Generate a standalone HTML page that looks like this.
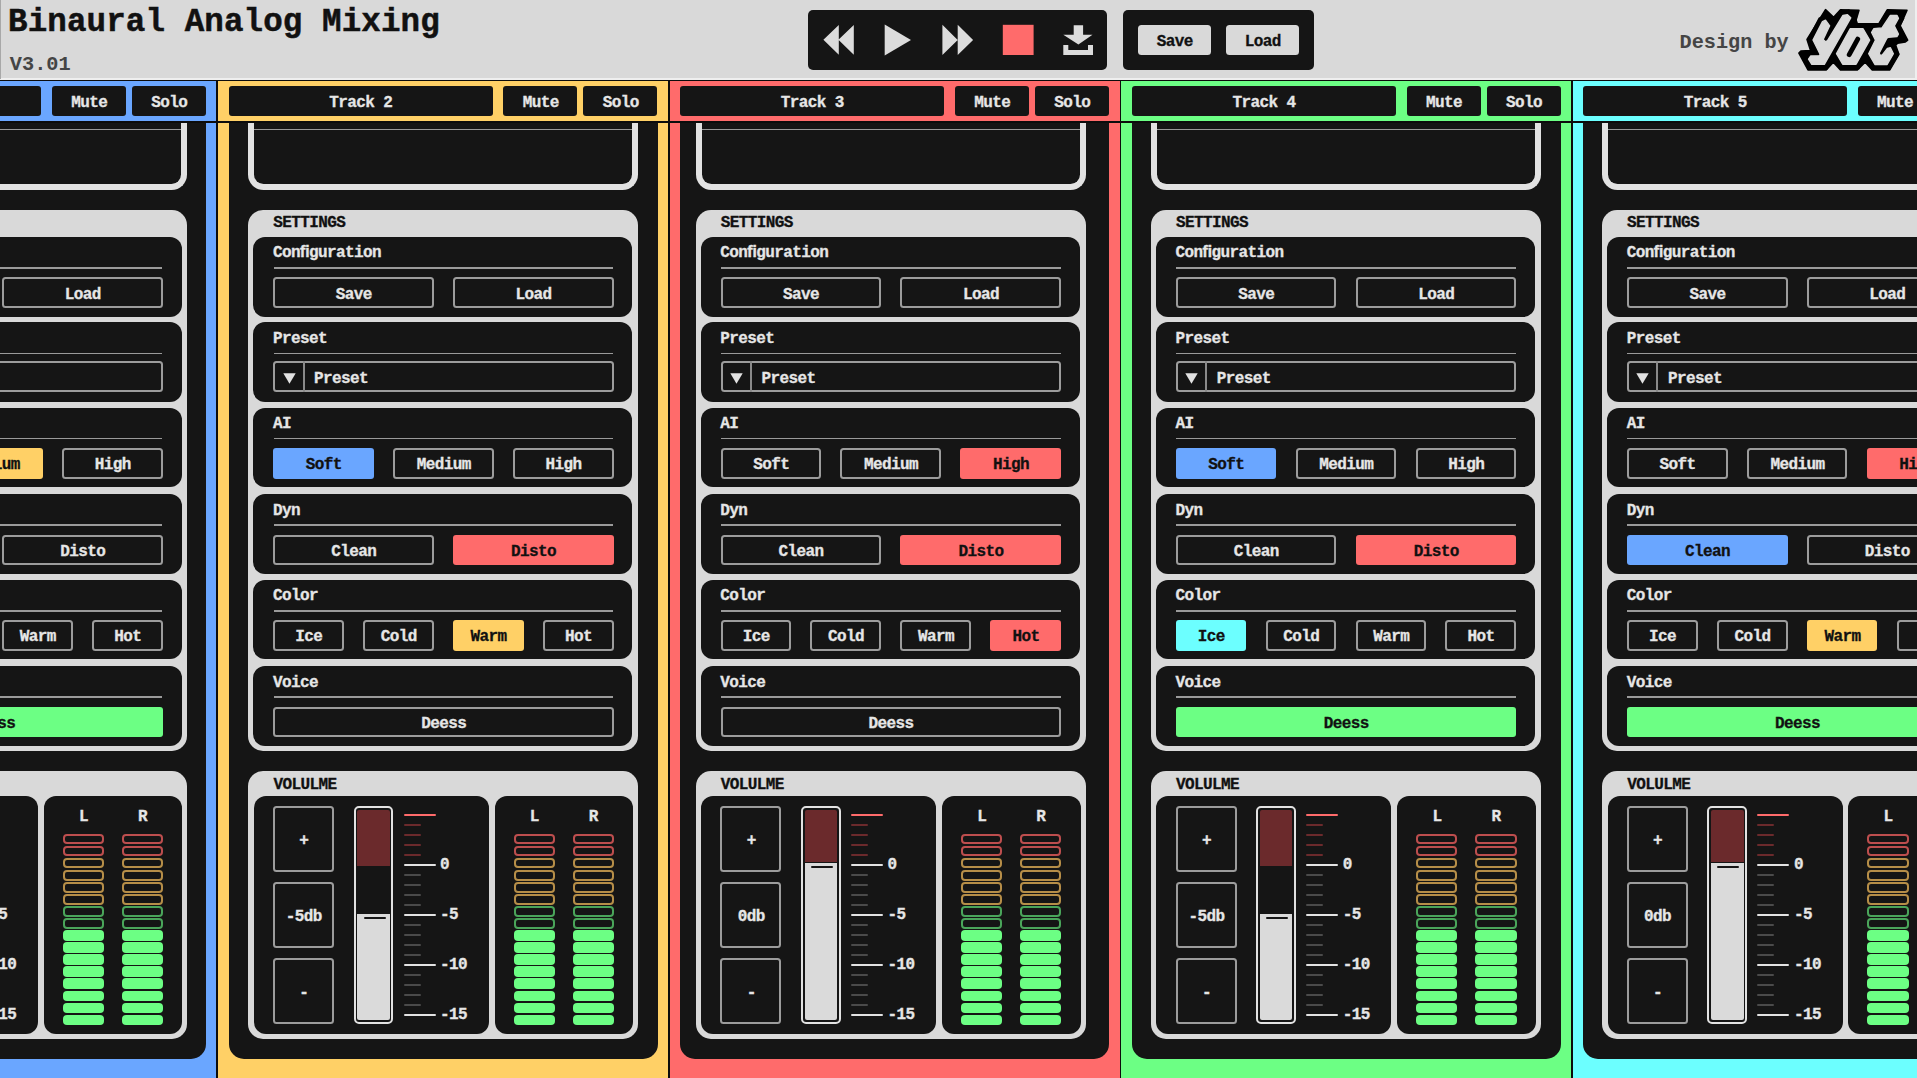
<!DOCTYPE html>
<html><head><meta charset="utf-8"><title>Binaural Analog Mixing</title>
<style>
html,body{margin:0;padding:0;}
body{width:1917px;height:1078px;overflow:hidden;position:relative;background:#151515;font-family:"Liberation Mono",monospace;font-weight:bold;}
div,svg{position:absolute;}
.t{white-space:nowrap;-webkit-text-stroke:0.3px currentColor;}
#wrap{left:0;top:0;width:1917px;height:1078px;overflow:hidden;}
</style></head><body><div id="wrap">
<div style="left:-233.27px;top:81px;width:450.2px;height:997px;background:#6aa6ff;"></div>
<div style="left:-235.07px;top:79.7px;width:1.8px;height:1000px;background:#0c0c0c;"></div>
<div style="left:-222.97px;top:86.4px;width:264px;height:29.2px;background:#151515;border-radius:3px;"></div>
<div class="t" style="left:-222.67px;top:93.68px;width:264px;font-size:16px;line-height:18.12px;text-align:center;letter-spacing:-0.6px;color:#e6e6e6;">Track 1</div>
<div style="left:51.93px;top:86.4px;width:74px;height:29.2px;background:#151515;border-radius:3px;"></div>
<div class="t" style="left:52.23px;top:93.68px;width:74px;font-size:16px;line-height:18.12px;text-align:center;letter-spacing:-0.6px;color:#e6e6e6;">Mute</div>
<div style="left:131.93px;top:86.4px;width:74px;height:29.2px;background:#151515;border-radius:3px;"></div>
<div class="t" style="left:132.23px;top:93.68px;width:74px;font-size:16px;line-height:18.12px;text-align:center;letter-spacing:-0.6px;color:#e6e6e6;">Solo</div>
<div style="left:-233.27px;top:121px;width:450.2px;height:1.6px;background:#0c0c0c;"></div>
<div style="left:-222.67px;top:122.5px;width:429px;height:936.2px;background:#151515;border-radius:0 0 15px 15px;"></div>
<div style="left:-202.7px;top:122.5px;width:390px;height:67.6px;border:6px solid #e2e2e2;border-top:0;border-radius:0 0 15.5px 15.5px;box-sizing:border-box;"></div>
<div style="left:-196.7px;top:128.8px;width:378px;height:1.5px;background:#9a9a9a;"></div>
<div style="left:-202.7px;top:209.6px;width:390px;height:541.1px;background:#d9d9d9;border-radius:15px;"></div>
<div class="t" style="left:-177.5px;top:213.98px;font-size:16px;line-height:18.12px;letter-spacing:-0.6px;color:#111;">SETTINGS</div>
<div style="left:-197.5px;top:236.8px;width:379px;height:79.8px;background:#151515;border-radius:12px;"></div>
<div class="t" style="left:-177.9px;top:244.48px;font-size:16px;line-height:18.12px;letter-spacing:-0.6px;color:#e6e6e6;">Con&#xFB01;guration</div>
<div style="left:-177.2px;top:267px;width:339.5px;height:1.8px;background:#9a9a9a;"></div>
<div style="left:-177.7px;top:277.4px;width:160.65px;height:30.6px;border:2px solid #9c9c9c;border-radius:3.5px;box-sizing:border-box;"></div>
<div class="t" style="left:-197.4px;top:285.58px;width:200.65px;font-size:16px;line-height:18.12px;text-align:center;letter-spacing:-0.6px;color:#e6e6e6;">Save</div>
<div style="left:2.15px;top:277.4px;width:160.65px;height:30.6px;border:2px solid #9c9c9c;border-radius:3.5px;box-sizing:border-box;"></div>
<div class="t" style="left:-17.55px;top:285.58px;width:200.65px;font-size:16px;line-height:18.12px;text-align:center;letter-spacing:-0.6px;color:#e6e6e6;">Load</div>
<div style="left:-197.5px;top:322.3px;width:379px;height:79.8px;background:#151515;border-radius:12px;"></div>
<div class="t" style="left:-177.9px;top:329.98px;font-size:16px;line-height:18.12px;letter-spacing:-0.6px;color:#e6e6e6;">Preset</div>
<div style="left:-177.2px;top:352.5px;width:339.5px;height:1.8px;background:#9a9a9a;"></div>
<div style="left:-177.7px;top:361.1px;width:340.5px;height:30.6px;border:2px solid #9c9c9c;border-radius:3.5px;box-sizing:border-box;"></div>
<div style="left:-148.3px;top:361.1px;width:2px;height:30.6px;background:#8a8a8a;"></div>
<svg class="a" style="left:-168.3px;top:372.5px" width="13" height="11" viewBox="0 0 13 11"><path d="M0.3 0.3H12.7L6.5 10.7Z" fill="#e2e2e2"/></svg>
<div class="t" style="left:-136.7px;top:369.88px;font-size:16px;line-height:18.12px;letter-spacing:-0.6px;color:#e6e6e6;">Preset</div>
<div style="left:-197.5px;top:407.5px;width:379px;height:79.8px;background:#151515;border-radius:12px;"></div>
<div class="t" style="left:-177.9px;top:415.18px;font-size:16px;line-height:18.12px;letter-spacing:-0.6px;color:#e6e6e6;">AI</div>
<div style="left:-177.2px;top:437.7px;width:339.5px;height:1.8px;background:#9a9a9a;"></div>
<div style="left:-177.7px;top:448.1px;width:100.7px;height:30.6px;border:2px solid #9c9c9c;border-radius:3.5px;box-sizing:border-box;"></div>
<div class="t" style="left:-197.4px;top:456.28px;width:140.7px;font-size:16px;line-height:18.12px;text-align:center;letter-spacing:-0.6px;color:#e6e6e6;">Soft</div>
<div style="left:-57.8px;top:448.1px;width:100.7px;height:30.6px;background:#ffd066;border-radius:3px;"></div>
<div class="t" style="left:-77.5px;top:456.28px;width:140.7px;font-size:16px;line-height:18.12px;text-align:center;letter-spacing:-0.6px;color:#111;">Medium</div>
<div style="left:62.1px;top:448.1px;width:100.7px;height:30.6px;border:2px solid #9c9c9c;border-radius:3.5px;box-sizing:border-box;"></div>
<div class="t" style="left:42.4px;top:456.28px;width:140.7px;font-size:16px;line-height:18.12px;text-align:center;letter-spacing:-0.6px;color:#e6e6e6;">High</div>
<div style="left:-197.5px;top:494.1px;width:379px;height:79.8px;background:#151515;border-radius:12px;"></div>
<div class="t" style="left:-177.9px;top:501.78px;font-size:16px;line-height:18.12px;letter-spacing:-0.6px;color:#e6e6e6;">Dyn</div>
<div style="left:-177.2px;top:524.3px;width:339.5px;height:1.8px;background:#9a9a9a;"></div>
<div style="left:-177.7px;top:534.7px;width:160.65px;height:30.6px;background:#6aa6ff;border-radius:3px;"></div>
<div class="t" style="left:-197.4px;top:542.88px;width:200.65px;font-size:16px;line-height:18.12px;text-align:center;letter-spacing:-0.6px;color:#111;">Clean</div>
<div style="left:2.15px;top:534.7px;width:160.65px;height:30.6px;border:2px solid #9c9c9c;border-radius:3.5px;box-sizing:border-box;"></div>
<div class="t" style="left:-17.55px;top:542.88px;width:200.65px;font-size:16px;line-height:18.12px;text-align:center;letter-spacing:-0.6px;color:#e6e6e6;">Disto</div>
<div style="left:-197.5px;top:579.6px;width:379px;height:79.8px;background:#151515;border-radius:12px;"></div>
<div class="t" style="left:-177.9px;top:587.28px;font-size:16px;line-height:18.12px;letter-spacing:-0.6px;color:#e6e6e6;">Color</div>
<div style="left:-177.2px;top:609.8px;width:339.5px;height:1.8px;background:#9a9a9a;"></div>
<div style="left:-177.7px;top:620.2px;width:70.72px;height:30.6px;background:#6cffff;border-radius:3px;"></div>
<div class="t" style="left:-197.4px;top:628.38px;width:110.72px;font-size:16px;line-height:18.12px;text-align:center;letter-spacing:-0.6px;color:#111;">Ice</div>
<div style="left:-87.77px;top:620.2px;width:70.72px;height:30.6px;border:2px solid #9c9c9c;border-radius:3.5px;box-sizing:border-box;"></div>
<div class="t" style="left:-107.47px;top:628.38px;width:110.72px;font-size:16px;line-height:18.12px;text-align:center;letter-spacing:-0.6px;color:#e6e6e6;">Cold</div>
<div style="left:2.15px;top:620.2px;width:70.72px;height:30.6px;border:2px solid #9c9c9c;border-radius:3.5px;box-sizing:border-box;"></div>
<div class="t" style="left:-17.55px;top:628.38px;width:110.72px;font-size:16px;line-height:18.12px;text-align:center;letter-spacing:-0.6px;color:#e6e6e6;">Warm</div>
<div style="left:92.07px;top:620.2px;width:70.72px;height:30.6px;border:2px solid #9c9c9c;border-radius:3.5px;box-sizing:border-box;"></div>
<div class="t" style="left:72.37px;top:628.38px;width:110.72px;font-size:16px;line-height:18.12px;text-align:center;letter-spacing:-0.6px;color:#e6e6e6;">Hot</div>
<div style="left:-197.5px;top:666.2px;width:379px;height:79.8px;background:#151515;border-radius:12px;"></div>
<div class="t" style="left:-177.9px;top:673.88px;font-size:16px;line-height:18.12px;letter-spacing:-0.6px;color:#e6e6e6;">Voice</div>
<div style="left:-177.2px;top:696.4px;width:339.5px;height:1.8px;background:#9a9a9a;"></div>
<div style="left:-177.7px;top:706.8px;width:340.5px;height:30.6px;background:#6cff84;border-radius:3px;"></div>
<div class="t" style="left:-197.4px;top:714.98px;width:380.5px;font-size:16px;line-height:18.12px;text-align:center;letter-spacing:-0.6px;color:#111;">Deess</div>
<div style="left:-202.7px;top:771.2px;width:390px;height:267.8px;background:#d9d9d9;border-radius:15px;"></div>
<div class="t" style="left:-177.4px;top:775.88px;font-size:16px;line-height:18.12px;letter-spacing:-0.6px;color:#111;">VOLULME</div>
<div style="left:-197px;top:796px;width:235.1px;height:237.8px;background:#151515;border-radius:12px;"></div>
<div style="left:43.8px;top:796px;width:138.7px;height:237.8px;background:#151515;border-radius:12px;"></div>
<div style="left:-177.8px;top:805.7px;width:61px;height:66.4px;border:2px solid #9c9c9c;border-radius:3.5px;box-sizing:border-box;"></div>
<div class="t" style="left:-187px;top:831.88px;width:80px;font-size:16px;line-height:18.12px;text-align:center;letter-spacing:-0.6px;color:#e6e6e6;">+</div>
<div style="left:-177.8px;top:881.65px;width:61px;height:66.4px;border:2px solid #9c9c9c;border-radius:3.5px;box-sizing:border-box;"></div>
<div class="t" style="left:-187px;top:907.83px;width:80px;font-size:16px;line-height:18.12px;text-align:center;letter-spacing:-0.6px;color:#e6e6e6;">0db</div>
<div style="left:-177.8px;top:957.6px;width:61px;height:66.4px;border:2px solid #9c9c9c;border-radius:3.5px;box-sizing:border-box;"></div>
<div class="t" style="left:-187px;top:983.78px;width:80px;font-size:16px;line-height:18.12px;text-align:center;letter-spacing:-0.6px;color:#e6e6e6;">-</div>
<div style="left:-97.3px;top:806.2px;width:39.9px;height:217.8px;border:2px solid #e2e2e2;border-radius:5px;box-sizing:border-box;"></div>
<div style="left:-93.6px;top:809.6px;width:32.6px;height:52.8px;background:#6b2a2c;border-radius:2px 2px 0 0;"></div>
<div style="left:-93.6px;top:863.2px;width:32.6px;height:157.3px;background:#dadada;border-radius:0 0 2px 2px;"></div>
<div style="left:-87.2px;top:866.2px;width:22px;height:2.2px;background:#151515;border-radius:1px;"></div>
<div style="left:-47.3px;top:814.1px;width:32.1px;height:2.3px;background:#ff6b6b;border-radius:1px;"></div>
<div style="left:-47.3px;top:824.2px;width:17px;height:2.1px;background:#6b2a2c;border-radius:1px;"></div>
<div style="left:-47.3px;top:834.2px;width:17px;height:2.1px;background:#6b2a2c;border-radius:1px;"></div>
<div style="left:-47.3px;top:844.2px;width:17px;height:2.1px;background:#6b2a2c;border-radius:1px;"></div>
<div style="left:-47.3px;top:854.2px;width:17px;height:2.1px;background:#6b2a2c;border-radius:1px;"></div>
<div style="left:-47.3px;top:864.1px;width:32.1px;height:2.3px;background:#e2e2e2;border-radius:1px;"></div>
<div style="left:-47.3px;top:874.2px;width:17px;height:2.1px;background:#4a4a4a;border-radius:1px;"></div>
<div style="left:-47.3px;top:884.2px;width:17px;height:2.1px;background:#4a4a4a;border-radius:1px;"></div>
<div style="left:-47.3px;top:894.2px;width:17px;height:2.1px;background:#4a4a4a;border-radius:1px;"></div>
<div style="left:-47.3px;top:904.2px;width:17px;height:2.1px;background:#4a4a4a;border-radius:1px;"></div>
<div style="left:-47.3px;top:914.1px;width:32.1px;height:2.3px;background:#e2e2e2;border-radius:1px;"></div>
<div style="left:-47.3px;top:924.2px;width:17px;height:2.1px;background:#4a4a4a;border-radius:1px;"></div>
<div style="left:-47.3px;top:934.2px;width:17px;height:2.1px;background:#4a4a4a;border-radius:1px;"></div>
<div style="left:-47.3px;top:944.2px;width:17px;height:2.1px;background:#4a4a4a;border-radius:1px;"></div>
<div style="left:-47.3px;top:954.2px;width:17px;height:2.1px;background:#4a4a4a;border-radius:1px;"></div>
<div style="left:-47.3px;top:964.1px;width:32.1px;height:2.3px;background:#e2e2e2;border-radius:1px;"></div>
<div style="left:-47.3px;top:974.2px;width:17px;height:2.1px;background:#4a4a4a;border-radius:1px;"></div>
<div style="left:-47.3px;top:984.2px;width:17px;height:2.1px;background:#4a4a4a;border-radius:1px;"></div>
<div style="left:-47.3px;top:994.2px;width:17px;height:2.1px;background:#4a4a4a;border-radius:1px;"></div>
<div style="left:-47.3px;top:1004.2px;width:17px;height:2.1px;background:#4a4a4a;border-radius:1px;"></div>
<div style="left:-47.3px;top:1014.1px;width:32.1px;height:2.3px;background:#e2e2e2;border-radius:1px;"></div>
<div class="t" style="left:-10.7px;top:856.48px;font-size:16px;line-height:18.12px;letter-spacing:-0.6px;color:#e6e6e6;">0</div>
<div class="t" style="left:-10.7px;top:906.48px;font-size:16px;line-height:18.12px;letter-spacing:-0.6px;color:#e6e6e6;">-5</div>
<div class="t" style="left:-10.7px;top:956.48px;font-size:16px;line-height:18.12px;letter-spacing:-0.6px;color:#e6e6e6;">-10</div>
<div class="t" style="left:-10.7px;top:1006.48px;font-size:16px;line-height:18.12px;letter-spacing:-0.6px;color:#e6e6e6;">-15</div>
<div class="t" style="left:68.5px;top:807.98px;width:30px;font-size:16px;line-height:18.12px;text-align:center;letter-spacing:-0.6px;color:#e6e6e6;">L</div>
<div class="t" style="left:127.5px;top:807.98px;width:30px;font-size:16px;line-height:18.12px;text-align:center;letter-spacing:-0.6px;color:#e6e6e6;">R</div>
<div style="left:62.7px;top:833.5px;width:41.4px;height:10.8px;border:2px solid #bd4e4e;border-radius:4px;box-sizing:border-box;"></div>
<div style="left:62.7px;top:845.58px;width:41.4px;height:10.8px;border:2px solid #bd4e4e;border-radius:4px;box-sizing:border-box;"></div>
<div style="left:62.7px;top:857.66px;width:41.4px;height:10.8px;border:2px solid #b68e48;border-radius:4px;box-sizing:border-box;"></div>
<div style="left:62.7px;top:869.74px;width:41.4px;height:10.8px;border:2px solid #b68e48;border-radius:4px;box-sizing:border-box;"></div>
<div style="left:62.7px;top:881.82px;width:41.4px;height:10.8px;border:2px solid #b68e48;border-radius:4px;box-sizing:border-box;"></div>
<div style="left:62.7px;top:893.9px;width:41.4px;height:10.8px;border:2px solid #b68e48;border-radius:4px;box-sizing:border-box;"></div>
<div style="left:62.7px;top:905.98px;width:41.4px;height:10.8px;border:2px solid #4aa55a;border-radius:4px;box-sizing:border-box;"></div>
<div style="left:62.7px;top:918.06px;width:41.4px;height:10.8px;border:2px solid #4aa55a;border-radius:4px;box-sizing:border-box;"></div>
<div style="left:62.7px;top:930.14px;width:41.4px;height:10.8px;background:#6cff84;border-radius:4px;box-sizing:border-box;"></div>
<div style="left:62.7px;top:942.22px;width:41.4px;height:10.8px;background:#6cff84;border-radius:4px;box-sizing:border-box;"></div>
<div style="left:62.7px;top:954.3px;width:41.4px;height:10.8px;background:#6cff84;border-radius:4px;box-sizing:border-box;"></div>
<div style="left:62.7px;top:966.38px;width:41.4px;height:10.8px;background:#6cff84;border-radius:4px;box-sizing:border-box;"></div>
<div style="left:62.7px;top:978.46px;width:41.4px;height:10.8px;background:#6cff84;border-radius:4px;box-sizing:border-box;"></div>
<div style="left:62.7px;top:990.54px;width:41.4px;height:10.8px;background:#6cff84;border-radius:4px;box-sizing:border-box;"></div>
<div style="left:62.7px;top:1002.62px;width:41.4px;height:10.8px;background:#6cff84;border-radius:4px;box-sizing:border-box;"></div>
<div style="left:62.7px;top:1014.7px;width:41.4px;height:10.8px;background:#6cff84;border-radius:4px;box-sizing:border-box;"></div>
<div style="left:121.8px;top:833.5px;width:41.4px;height:10.8px;border:2px solid #bd4e4e;border-radius:4px;box-sizing:border-box;"></div>
<div style="left:121.8px;top:845.58px;width:41.4px;height:10.8px;border:2px solid #bd4e4e;border-radius:4px;box-sizing:border-box;"></div>
<div style="left:121.8px;top:857.66px;width:41.4px;height:10.8px;border:2px solid #b68e48;border-radius:4px;box-sizing:border-box;"></div>
<div style="left:121.8px;top:869.74px;width:41.4px;height:10.8px;border:2px solid #b68e48;border-radius:4px;box-sizing:border-box;"></div>
<div style="left:121.8px;top:881.82px;width:41.4px;height:10.8px;border:2px solid #b68e48;border-radius:4px;box-sizing:border-box;"></div>
<div style="left:121.8px;top:893.9px;width:41.4px;height:10.8px;border:2px solid #b68e48;border-radius:4px;box-sizing:border-box;"></div>
<div style="left:121.8px;top:905.98px;width:41.4px;height:10.8px;border:2px solid #4aa55a;border-radius:4px;box-sizing:border-box;"></div>
<div style="left:121.8px;top:918.06px;width:41.4px;height:10.8px;border:2px solid #4aa55a;border-radius:4px;box-sizing:border-box;"></div>
<div style="left:121.8px;top:930.14px;width:41.4px;height:10.8px;background:#6cff84;border-radius:4px;box-sizing:border-box;"></div>
<div style="left:121.8px;top:942.22px;width:41.4px;height:10.8px;background:#6cff84;border-radius:4px;box-sizing:border-box;"></div>
<div style="left:121.8px;top:954.3px;width:41.4px;height:10.8px;background:#6cff84;border-radius:4px;box-sizing:border-box;"></div>
<div style="left:121.8px;top:966.38px;width:41.4px;height:10.8px;background:#6cff84;border-radius:4px;box-sizing:border-box;"></div>
<div style="left:121.8px;top:978.46px;width:41.4px;height:10.8px;background:#6cff84;border-radius:4px;box-sizing:border-box;"></div>
<div style="left:121.8px;top:990.54px;width:41.4px;height:10.8px;background:#6cff84;border-radius:4px;box-sizing:border-box;"></div>
<div style="left:121.8px;top:1002.62px;width:41.4px;height:10.8px;background:#6cff84;border-radius:4px;box-sizing:border-box;"></div>
<div style="left:121.8px;top:1014.7px;width:41.4px;height:10.8px;background:#6cff84;border-radius:4px;box-sizing:border-box;"></div>
<div style="left:218.2px;top:81px;width:450.2px;height:997px;background:#ffd066;"></div>
<div style="left:216.4px;top:79.7px;width:1.8px;height:1000px;background:#0c0c0c;"></div>
<div style="left:228.5px;top:86.4px;width:264px;height:29.2px;background:#151515;border-radius:3px;"></div>
<div class="t" style="left:228.8px;top:93.68px;width:264px;font-size:16px;line-height:18.12px;text-align:center;letter-spacing:-0.6px;color:#e6e6e6;">Track 2</div>
<div style="left:503.4px;top:86.4px;width:74px;height:29.2px;background:#151515;border-radius:3px;"></div>
<div class="t" style="left:503.7px;top:93.68px;width:74px;font-size:16px;line-height:18.12px;text-align:center;letter-spacing:-0.6px;color:#e6e6e6;">Mute</div>
<div style="left:583.4px;top:86.4px;width:74px;height:29.2px;background:#151515;border-radius:3px;"></div>
<div class="t" style="left:583.7px;top:93.68px;width:74px;font-size:16px;line-height:18.12px;text-align:center;letter-spacing:-0.6px;color:#e6e6e6;">Solo</div>
<div style="left:218.2px;top:121px;width:450.2px;height:1.6px;background:#0c0c0c;"></div>
<div style="left:228.8px;top:122.5px;width:429px;height:936.2px;background:#151515;border-radius:0 0 15px 15px;"></div>
<div style="left:248.1px;top:122.5px;width:390px;height:67.6px;border:6px solid #e2e2e2;border-top:0;border-radius:0 0 15.5px 15.5px;box-sizing:border-box;"></div>
<div style="left:254.1px;top:128.8px;width:378px;height:1.5px;background:#9a9a9a;"></div>
<div style="left:248.1px;top:209.6px;width:390px;height:541.1px;background:#d9d9d9;border-radius:15px;"></div>
<div class="t" style="left:273.3px;top:213.98px;font-size:16px;line-height:18.12px;letter-spacing:-0.6px;color:#111;">SETTINGS</div>
<div style="left:253.3px;top:236.8px;width:379px;height:79.8px;background:#151515;border-radius:12px;"></div>
<div class="t" style="left:272.9px;top:244.48px;font-size:16px;line-height:18.12px;letter-spacing:-0.6px;color:#e6e6e6;">Con&#xFB01;guration</div>
<div style="left:273.6px;top:267px;width:339.5px;height:1.8px;background:#9a9a9a;"></div>
<div style="left:273.1px;top:277.4px;width:160.65px;height:30.6px;border:2px solid #9c9c9c;border-radius:3.5px;box-sizing:border-box;"></div>
<div class="t" style="left:253.4px;top:285.58px;width:200.65px;font-size:16px;line-height:18.12px;text-align:center;letter-spacing:-0.6px;color:#e6e6e6;">Save</div>
<div style="left:452.95px;top:277.4px;width:160.65px;height:30.6px;border:2px solid #9c9c9c;border-radius:3.5px;box-sizing:border-box;"></div>
<div class="t" style="left:433.25px;top:285.58px;width:200.65px;font-size:16px;line-height:18.12px;text-align:center;letter-spacing:-0.6px;color:#e6e6e6;">Load</div>
<div style="left:253.3px;top:322.3px;width:379px;height:79.8px;background:#151515;border-radius:12px;"></div>
<div class="t" style="left:272.9px;top:329.98px;font-size:16px;line-height:18.12px;letter-spacing:-0.6px;color:#e6e6e6;">Preset</div>
<div style="left:273.6px;top:352.5px;width:339.5px;height:1.8px;background:#9a9a9a;"></div>
<div style="left:273.1px;top:361.1px;width:340.5px;height:30.6px;border:2px solid #9c9c9c;border-radius:3.5px;box-sizing:border-box;"></div>
<div style="left:302.5px;top:361.1px;width:2px;height:30.6px;background:#8a8a8a;"></div>
<svg class="a" style="left:282.5px;top:372.5px" width="13" height="11" viewBox="0 0 13 11"><path d="M0.3 0.3H12.7L6.5 10.7Z" fill="#e2e2e2"/></svg>
<div class="t" style="left:314.1px;top:369.88px;font-size:16px;line-height:18.12px;letter-spacing:-0.6px;color:#e6e6e6;">Preset</div>
<div style="left:253.3px;top:407.5px;width:379px;height:79.8px;background:#151515;border-radius:12px;"></div>
<div class="t" style="left:272.9px;top:415.18px;font-size:16px;line-height:18.12px;letter-spacing:-0.6px;color:#e6e6e6;">AI</div>
<div style="left:273.6px;top:437.7px;width:339.5px;height:1.8px;background:#9a9a9a;"></div>
<div style="left:273.1px;top:448.1px;width:100.7px;height:30.6px;background:#6aa6ff;border-radius:3px;"></div>
<div class="t" style="left:253.4px;top:456.28px;width:140.7px;font-size:16px;line-height:18.12px;text-align:center;letter-spacing:-0.6px;color:#111;">Soft</div>
<div style="left:393px;top:448.1px;width:100.7px;height:30.6px;border:2px solid #9c9c9c;border-radius:3.5px;box-sizing:border-box;"></div>
<div class="t" style="left:373.3px;top:456.28px;width:140.7px;font-size:16px;line-height:18.12px;text-align:center;letter-spacing:-0.6px;color:#e6e6e6;">Medium</div>
<div style="left:512.9px;top:448.1px;width:100.7px;height:30.6px;border:2px solid #9c9c9c;border-radius:3.5px;box-sizing:border-box;"></div>
<div class="t" style="left:493.2px;top:456.28px;width:140.7px;font-size:16px;line-height:18.12px;text-align:center;letter-spacing:-0.6px;color:#e6e6e6;">High</div>
<div style="left:253.3px;top:494.1px;width:379px;height:79.8px;background:#151515;border-radius:12px;"></div>
<div class="t" style="left:272.9px;top:501.78px;font-size:16px;line-height:18.12px;letter-spacing:-0.6px;color:#e6e6e6;">Dyn</div>
<div style="left:273.6px;top:524.3px;width:339.5px;height:1.8px;background:#9a9a9a;"></div>
<div style="left:273.1px;top:534.7px;width:160.65px;height:30.6px;border:2px solid #9c9c9c;border-radius:3.5px;box-sizing:border-box;"></div>
<div class="t" style="left:253.4px;top:542.88px;width:200.65px;font-size:16px;line-height:18.12px;text-align:center;letter-spacing:-0.6px;color:#e6e6e6;">Clean</div>
<div style="left:452.95px;top:534.7px;width:160.65px;height:30.6px;background:#ff6b6b;border-radius:3px;"></div>
<div class="t" style="left:433.25px;top:542.88px;width:200.65px;font-size:16px;line-height:18.12px;text-align:center;letter-spacing:-0.6px;color:#111;">Disto</div>
<div style="left:253.3px;top:579.6px;width:379px;height:79.8px;background:#151515;border-radius:12px;"></div>
<div class="t" style="left:272.9px;top:587.28px;font-size:16px;line-height:18.12px;letter-spacing:-0.6px;color:#e6e6e6;">Color</div>
<div style="left:273.6px;top:609.8px;width:339.5px;height:1.8px;background:#9a9a9a;"></div>
<div style="left:273.1px;top:620.2px;width:70.72px;height:30.6px;border:2px solid #9c9c9c;border-radius:3.5px;box-sizing:border-box;"></div>
<div class="t" style="left:253.4px;top:628.38px;width:110.72px;font-size:16px;line-height:18.12px;text-align:center;letter-spacing:-0.6px;color:#e6e6e6;">Ice</div>
<div style="left:363.03px;top:620.2px;width:70.72px;height:30.6px;border:2px solid #9c9c9c;border-radius:3.5px;box-sizing:border-box;"></div>
<div class="t" style="left:343.33px;top:628.38px;width:110.72px;font-size:16px;line-height:18.12px;text-align:center;letter-spacing:-0.6px;color:#e6e6e6;">Cold</div>
<div style="left:452.95px;top:620.2px;width:70.72px;height:30.6px;background:#ffd066;border-radius:3px;"></div>
<div class="t" style="left:433.25px;top:628.38px;width:110.72px;font-size:16px;line-height:18.12px;text-align:center;letter-spacing:-0.6px;color:#111;">Warm</div>
<div style="left:542.88px;top:620.2px;width:70.72px;height:30.6px;border:2px solid #9c9c9c;border-radius:3.5px;box-sizing:border-box;"></div>
<div class="t" style="left:523.17px;top:628.38px;width:110.72px;font-size:16px;line-height:18.12px;text-align:center;letter-spacing:-0.6px;color:#e6e6e6;">Hot</div>
<div style="left:253.3px;top:666.2px;width:379px;height:79.8px;background:#151515;border-radius:12px;"></div>
<div class="t" style="left:272.9px;top:673.88px;font-size:16px;line-height:18.12px;letter-spacing:-0.6px;color:#e6e6e6;">Voice</div>
<div style="left:273.6px;top:696.4px;width:339.5px;height:1.8px;background:#9a9a9a;"></div>
<div style="left:273.1px;top:706.8px;width:340.5px;height:30.6px;border:2px solid #9c9c9c;border-radius:3.5px;box-sizing:border-box;"></div>
<div class="t" style="left:253.4px;top:714.98px;width:380.5px;font-size:16px;line-height:18.12px;text-align:center;letter-spacing:-0.6px;color:#e6e6e6;">Deess</div>
<div style="left:248.1px;top:771.2px;width:390px;height:267.8px;background:#d9d9d9;border-radius:15px;"></div>
<div class="t" style="left:273.4px;top:775.88px;font-size:16px;line-height:18.12px;letter-spacing:-0.6px;color:#111;">VOLULME</div>
<div style="left:253.8px;top:796px;width:235.1px;height:237.8px;background:#151515;border-radius:12px;"></div>
<div style="left:494.6px;top:796px;width:138.7px;height:237.8px;background:#151515;border-radius:12px;"></div>
<div style="left:273px;top:805.7px;width:61px;height:66.4px;border:2px solid #9c9c9c;border-radius:3.5px;box-sizing:border-box;"></div>
<div class="t" style="left:263.8px;top:831.88px;width:80px;font-size:16px;line-height:18.12px;text-align:center;letter-spacing:-0.6px;color:#e6e6e6;">+</div>
<div style="left:273px;top:881.65px;width:61px;height:66.4px;border:2px solid #9c9c9c;border-radius:3.5px;box-sizing:border-box;"></div>
<div class="t" style="left:263.8px;top:907.83px;width:80px;font-size:16px;line-height:18.12px;text-align:center;letter-spacing:-0.6px;color:#e6e6e6;">-5db</div>
<div style="left:273px;top:957.6px;width:61px;height:66.4px;border:2px solid #9c9c9c;border-radius:3.5px;box-sizing:border-box;"></div>
<div class="t" style="left:263.8px;top:983.78px;width:80px;font-size:16px;line-height:18.12px;text-align:center;letter-spacing:-0.6px;color:#e6e6e6;">-</div>
<div style="left:353.5px;top:806.2px;width:39.9px;height:217.8px;border:2px solid #e2e2e2;border-radius:5px;box-sizing:border-box;"></div>
<div style="left:357.2px;top:809.6px;width:32.6px;height:56px;background:#6b2a2c;border-radius:2px 2px 0 0;"></div>
<div style="left:357.2px;top:913.7px;width:32.6px;height:106.8px;background:#dadada;border-radius:0 0 2px 2px;"></div>
<div style="left:363.6px;top:916.6px;width:22px;height:2.2px;background:#151515;border-radius:1px;"></div>
<div style="left:403.5px;top:814.1px;width:32.1px;height:2.3px;background:#ff6b6b;border-radius:1px;"></div>
<div style="left:403.5px;top:824.2px;width:17px;height:2.1px;background:#6b2a2c;border-radius:1px;"></div>
<div style="left:403.5px;top:834.2px;width:17px;height:2.1px;background:#6b2a2c;border-radius:1px;"></div>
<div style="left:403.5px;top:844.2px;width:17px;height:2.1px;background:#6b2a2c;border-radius:1px;"></div>
<div style="left:403.5px;top:854.2px;width:17px;height:2.1px;background:#6b2a2c;border-radius:1px;"></div>
<div style="left:403.5px;top:864.1px;width:32.1px;height:2.3px;background:#e2e2e2;border-radius:1px;"></div>
<div style="left:403.5px;top:874.2px;width:17px;height:2.1px;background:#4a4a4a;border-radius:1px;"></div>
<div style="left:403.5px;top:884.2px;width:17px;height:2.1px;background:#4a4a4a;border-radius:1px;"></div>
<div style="left:403.5px;top:894.2px;width:17px;height:2.1px;background:#4a4a4a;border-radius:1px;"></div>
<div style="left:403.5px;top:904.2px;width:17px;height:2.1px;background:#4a4a4a;border-radius:1px;"></div>
<div style="left:403.5px;top:914.1px;width:32.1px;height:2.3px;background:#e2e2e2;border-radius:1px;"></div>
<div style="left:403.5px;top:924.2px;width:17px;height:2.1px;background:#4a4a4a;border-radius:1px;"></div>
<div style="left:403.5px;top:934.2px;width:17px;height:2.1px;background:#4a4a4a;border-radius:1px;"></div>
<div style="left:403.5px;top:944.2px;width:17px;height:2.1px;background:#4a4a4a;border-radius:1px;"></div>
<div style="left:403.5px;top:954.2px;width:17px;height:2.1px;background:#4a4a4a;border-radius:1px;"></div>
<div style="left:403.5px;top:964.1px;width:32.1px;height:2.3px;background:#e2e2e2;border-radius:1px;"></div>
<div style="left:403.5px;top:974.2px;width:17px;height:2.1px;background:#4a4a4a;border-radius:1px;"></div>
<div style="left:403.5px;top:984.2px;width:17px;height:2.1px;background:#4a4a4a;border-radius:1px;"></div>
<div style="left:403.5px;top:994.2px;width:17px;height:2.1px;background:#4a4a4a;border-radius:1px;"></div>
<div style="left:403.5px;top:1004.2px;width:17px;height:2.1px;background:#4a4a4a;border-radius:1px;"></div>
<div style="left:403.5px;top:1014.1px;width:32.1px;height:2.3px;background:#e2e2e2;border-radius:1px;"></div>
<div class="t" style="left:440.1px;top:856.48px;font-size:16px;line-height:18.12px;letter-spacing:-0.6px;color:#e6e6e6;">0</div>
<div class="t" style="left:440.1px;top:906.48px;font-size:16px;line-height:18.12px;letter-spacing:-0.6px;color:#e6e6e6;">-5</div>
<div class="t" style="left:440.1px;top:956.48px;font-size:16px;line-height:18.12px;letter-spacing:-0.6px;color:#e6e6e6;">-10</div>
<div class="t" style="left:440.1px;top:1006.48px;font-size:16px;line-height:18.12px;letter-spacing:-0.6px;color:#e6e6e6;">-15</div>
<div class="t" style="left:519.3px;top:807.98px;width:30px;font-size:16px;line-height:18.12px;text-align:center;letter-spacing:-0.6px;color:#e6e6e6;">L</div>
<div class="t" style="left:578.3px;top:807.98px;width:30px;font-size:16px;line-height:18.12px;text-align:center;letter-spacing:-0.6px;color:#e6e6e6;">R</div>
<div style="left:513.5px;top:833.5px;width:41.4px;height:10.8px;border:2px solid #bd4e4e;border-radius:4px;box-sizing:border-box;"></div>
<div style="left:513.5px;top:845.58px;width:41.4px;height:10.8px;border:2px solid #bd4e4e;border-radius:4px;box-sizing:border-box;"></div>
<div style="left:513.5px;top:857.66px;width:41.4px;height:10.8px;border:2px solid #b68e48;border-radius:4px;box-sizing:border-box;"></div>
<div style="left:513.5px;top:869.74px;width:41.4px;height:10.8px;border:2px solid #b68e48;border-radius:4px;box-sizing:border-box;"></div>
<div style="left:513.5px;top:881.82px;width:41.4px;height:10.8px;border:2px solid #b68e48;border-radius:4px;box-sizing:border-box;"></div>
<div style="left:513.5px;top:893.9px;width:41.4px;height:10.8px;border:2px solid #b68e48;border-radius:4px;box-sizing:border-box;"></div>
<div style="left:513.5px;top:905.98px;width:41.4px;height:10.8px;border:2px solid #4aa55a;border-radius:4px;box-sizing:border-box;"></div>
<div style="left:513.5px;top:918.06px;width:41.4px;height:10.8px;border:2px solid #4aa55a;border-radius:4px;box-sizing:border-box;"></div>
<div style="left:513.5px;top:930.14px;width:41.4px;height:10.8px;background:#6cff84;border-radius:4px;box-sizing:border-box;"></div>
<div style="left:513.5px;top:942.22px;width:41.4px;height:10.8px;background:#6cff84;border-radius:4px;box-sizing:border-box;"></div>
<div style="left:513.5px;top:954.3px;width:41.4px;height:10.8px;background:#6cff84;border-radius:4px;box-sizing:border-box;"></div>
<div style="left:513.5px;top:966.38px;width:41.4px;height:10.8px;background:#6cff84;border-radius:4px;box-sizing:border-box;"></div>
<div style="left:513.5px;top:978.46px;width:41.4px;height:10.8px;background:#6cff84;border-radius:4px;box-sizing:border-box;"></div>
<div style="left:513.5px;top:990.54px;width:41.4px;height:10.8px;background:#6cff84;border-radius:4px;box-sizing:border-box;"></div>
<div style="left:513.5px;top:1002.62px;width:41.4px;height:10.8px;background:#6cff84;border-radius:4px;box-sizing:border-box;"></div>
<div style="left:513.5px;top:1014.7px;width:41.4px;height:10.8px;background:#6cff84;border-radius:4px;box-sizing:border-box;"></div>
<div style="left:572.6px;top:833.5px;width:41.4px;height:10.8px;border:2px solid #bd4e4e;border-radius:4px;box-sizing:border-box;"></div>
<div style="left:572.6px;top:845.58px;width:41.4px;height:10.8px;border:2px solid #bd4e4e;border-radius:4px;box-sizing:border-box;"></div>
<div style="left:572.6px;top:857.66px;width:41.4px;height:10.8px;border:2px solid #b68e48;border-radius:4px;box-sizing:border-box;"></div>
<div style="left:572.6px;top:869.74px;width:41.4px;height:10.8px;border:2px solid #b68e48;border-radius:4px;box-sizing:border-box;"></div>
<div style="left:572.6px;top:881.82px;width:41.4px;height:10.8px;border:2px solid #b68e48;border-radius:4px;box-sizing:border-box;"></div>
<div style="left:572.6px;top:893.9px;width:41.4px;height:10.8px;border:2px solid #b68e48;border-radius:4px;box-sizing:border-box;"></div>
<div style="left:572.6px;top:905.98px;width:41.4px;height:10.8px;border:2px solid #4aa55a;border-radius:4px;box-sizing:border-box;"></div>
<div style="left:572.6px;top:918.06px;width:41.4px;height:10.8px;border:2px solid #4aa55a;border-radius:4px;box-sizing:border-box;"></div>
<div style="left:572.6px;top:930.14px;width:41.4px;height:10.8px;background:#6cff84;border-radius:4px;box-sizing:border-box;"></div>
<div style="left:572.6px;top:942.22px;width:41.4px;height:10.8px;background:#6cff84;border-radius:4px;box-sizing:border-box;"></div>
<div style="left:572.6px;top:954.3px;width:41.4px;height:10.8px;background:#6cff84;border-radius:4px;box-sizing:border-box;"></div>
<div style="left:572.6px;top:966.38px;width:41.4px;height:10.8px;background:#6cff84;border-radius:4px;box-sizing:border-box;"></div>
<div style="left:572.6px;top:978.46px;width:41.4px;height:10.8px;background:#6cff84;border-radius:4px;box-sizing:border-box;"></div>
<div style="left:572.6px;top:990.54px;width:41.4px;height:10.8px;background:#6cff84;border-radius:4px;box-sizing:border-box;"></div>
<div style="left:572.6px;top:1002.62px;width:41.4px;height:10.8px;background:#6cff84;border-radius:4px;box-sizing:border-box;"></div>
<div style="left:572.6px;top:1014.7px;width:41.4px;height:10.8px;background:#6cff84;border-radius:4px;box-sizing:border-box;"></div>
<div style="left:669.67px;top:81px;width:450.2px;height:997px;background:#ff6b6b;"></div>
<div style="left:667.87px;top:79.7px;width:1.8px;height:1000px;background:#0c0c0c;"></div>
<div style="left:679.97px;top:86.4px;width:264px;height:29.2px;background:#151515;border-radius:3px;"></div>
<div class="t" style="left:680.27px;top:93.68px;width:264px;font-size:16px;line-height:18.12px;text-align:center;letter-spacing:-0.6px;color:#e6e6e6;">Track 3</div>
<div style="left:954.87px;top:86.4px;width:74px;height:29.2px;background:#151515;border-radius:3px;"></div>
<div class="t" style="left:955.17px;top:93.68px;width:74px;font-size:16px;line-height:18.12px;text-align:center;letter-spacing:-0.6px;color:#e6e6e6;">Mute</div>
<div style="left:1034.87px;top:86.4px;width:74px;height:29.2px;background:#151515;border-radius:3px;"></div>
<div class="t" style="left:1035.17px;top:93.68px;width:74px;font-size:16px;line-height:18.12px;text-align:center;letter-spacing:-0.6px;color:#e6e6e6;">Solo</div>
<div style="left:669.67px;top:121px;width:450.2px;height:1.6px;background:#0c0c0c;"></div>
<div style="left:680.27px;top:122.5px;width:429px;height:936.2px;background:#151515;border-radius:0 0 15px 15px;"></div>
<div style="left:695.5px;top:122.5px;width:390px;height:67.6px;border:6px solid #e2e2e2;border-top:0;border-radius:0 0 15.5px 15.5px;box-sizing:border-box;"></div>
<div style="left:701.5px;top:128.8px;width:378px;height:1.5px;background:#9a9a9a;"></div>
<div style="left:695.5px;top:209.6px;width:390px;height:541.1px;background:#d9d9d9;border-radius:15px;"></div>
<div class="t" style="left:720.7px;top:213.98px;font-size:16px;line-height:18.12px;letter-spacing:-0.6px;color:#111;">SETTINGS</div>
<div style="left:700.7px;top:236.8px;width:379px;height:79.8px;background:#151515;border-radius:12px;"></div>
<div class="t" style="left:720.3px;top:244.48px;font-size:16px;line-height:18.12px;letter-spacing:-0.6px;color:#e6e6e6;">Con&#xFB01;guration</div>
<div style="left:721px;top:267px;width:339.5px;height:1.8px;background:#9a9a9a;"></div>
<div style="left:720.5px;top:277.4px;width:160.65px;height:30.6px;border:2px solid #9c9c9c;border-radius:3.5px;box-sizing:border-box;"></div>
<div class="t" style="left:700.8px;top:285.58px;width:200.65px;font-size:16px;line-height:18.12px;text-align:center;letter-spacing:-0.6px;color:#e6e6e6;">Save</div>
<div style="left:900.35px;top:277.4px;width:160.65px;height:30.6px;border:2px solid #9c9c9c;border-radius:3.5px;box-sizing:border-box;"></div>
<div class="t" style="left:880.65px;top:285.58px;width:200.65px;font-size:16px;line-height:18.12px;text-align:center;letter-spacing:-0.6px;color:#e6e6e6;">Load</div>
<div style="left:700.7px;top:322.3px;width:379px;height:79.8px;background:#151515;border-radius:12px;"></div>
<div class="t" style="left:720.3px;top:329.98px;font-size:16px;line-height:18.12px;letter-spacing:-0.6px;color:#e6e6e6;">Preset</div>
<div style="left:721px;top:352.5px;width:339.5px;height:1.8px;background:#9a9a9a;"></div>
<div style="left:720.5px;top:361.1px;width:340.5px;height:30.6px;border:2px solid #9c9c9c;border-radius:3.5px;box-sizing:border-box;"></div>
<div style="left:749.9px;top:361.1px;width:2px;height:30.6px;background:#8a8a8a;"></div>
<svg class="a" style="left:729.9px;top:372.5px" width="13" height="11" viewBox="0 0 13 11"><path d="M0.3 0.3H12.7L6.5 10.7Z" fill="#e2e2e2"/></svg>
<div class="t" style="left:761.5px;top:369.88px;font-size:16px;line-height:18.12px;letter-spacing:-0.6px;color:#e6e6e6;">Preset</div>
<div style="left:700.7px;top:407.5px;width:379px;height:79.8px;background:#151515;border-radius:12px;"></div>
<div class="t" style="left:720.3px;top:415.18px;font-size:16px;line-height:18.12px;letter-spacing:-0.6px;color:#e6e6e6;">AI</div>
<div style="left:721px;top:437.7px;width:339.5px;height:1.8px;background:#9a9a9a;"></div>
<div style="left:720.5px;top:448.1px;width:100.7px;height:30.6px;border:2px solid #9c9c9c;border-radius:3.5px;box-sizing:border-box;"></div>
<div class="t" style="left:700.8px;top:456.28px;width:140.7px;font-size:16px;line-height:18.12px;text-align:center;letter-spacing:-0.6px;color:#e6e6e6;">Soft</div>
<div style="left:840.4px;top:448.1px;width:100.7px;height:30.6px;border:2px solid #9c9c9c;border-radius:3.5px;box-sizing:border-box;"></div>
<div class="t" style="left:820.7px;top:456.28px;width:140.7px;font-size:16px;line-height:18.12px;text-align:center;letter-spacing:-0.6px;color:#e6e6e6;">Medium</div>
<div style="left:960.3px;top:448.1px;width:100.7px;height:30.6px;background:#ff6b6b;border-radius:3px;"></div>
<div class="t" style="left:940.6px;top:456.28px;width:140.7px;font-size:16px;line-height:18.12px;text-align:center;letter-spacing:-0.6px;color:#111;">High</div>
<div style="left:700.7px;top:494.1px;width:379px;height:79.8px;background:#151515;border-radius:12px;"></div>
<div class="t" style="left:720.3px;top:501.78px;font-size:16px;line-height:18.12px;letter-spacing:-0.6px;color:#e6e6e6;">Dyn</div>
<div style="left:721px;top:524.3px;width:339.5px;height:1.8px;background:#9a9a9a;"></div>
<div style="left:720.5px;top:534.7px;width:160.65px;height:30.6px;border:2px solid #9c9c9c;border-radius:3.5px;box-sizing:border-box;"></div>
<div class="t" style="left:700.8px;top:542.88px;width:200.65px;font-size:16px;line-height:18.12px;text-align:center;letter-spacing:-0.6px;color:#e6e6e6;">Clean</div>
<div style="left:900.35px;top:534.7px;width:160.65px;height:30.6px;background:#ff6b6b;border-radius:3px;"></div>
<div class="t" style="left:880.65px;top:542.88px;width:200.65px;font-size:16px;line-height:18.12px;text-align:center;letter-spacing:-0.6px;color:#111;">Disto</div>
<div style="left:700.7px;top:579.6px;width:379px;height:79.8px;background:#151515;border-radius:12px;"></div>
<div class="t" style="left:720.3px;top:587.28px;font-size:16px;line-height:18.12px;letter-spacing:-0.6px;color:#e6e6e6;">Color</div>
<div style="left:721px;top:609.8px;width:339.5px;height:1.8px;background:#9a9a9a;"></div>
<div style="left:720.5px;top:620.2px;width:70.72px;height:30.6px;border:2px solid #9c9c9c;border-radius:3.5px;box-sizing:border-box;"></div>
<div class="t" style="left:700.8px;top:628.38px;width:110.72px;font-size:16px;line-height:18.12px;text-align:center;letter-spacing:-0.6px;color:#e6e6e6;">Ice</div>
<div style="left:810.42px;top:620.2px;width:70.72px;height:30.6px;border:2px solid #9c9c9c;border-radius:3.5px;box-sizing:border-box;"></div>
<div class="t" style="left:790.72px;top:628.38px;width:110.72px;font-size:16px;line-height:18.12px;text-align:center;letter-spacing:-0.6px;color:#e6e6e6;">Cold</div>
<div style="left:900.35px;top:620.2px;width:70.72px;height:30.6px;border:2px solid #9c9c9c;border-radius:3.5px;box-sizing:border-box;"></div>
<div class="t" style="left:880.65px;top:628.38px;width:110.72px;font-size:16px;line-height:18.12px;text-align:center;letter-spacing:-0.6px;color:#e6e6e6;">Warm</div>
<div style="left:990.27px;top:620.2px;width:70.72px;height:30.6px;background:#ff6b6b;border-radius:3px;"></div>
<div class="t" style="left:970.58px;top:628.38px;width:110.72px;font-size:16px;line-height:18.12px;text-align:center;letter-spacing:-0.6px;color:#111;">Hot</div>
<div style="left:700.7px;top:666.2px;width:379px;height:79.8px;background:#151515;border-radius:12px;"></div>
<div class="t" style="left:720.3px;top:673.88px;font-size:16px;line-height:18.12px;letter-spacing:-0.6px;color:#e6e6e6;">Voice</div>
<div style="left:721px;top:696.4px;width:339.5px;height:1.8px;background:#9a9a9a;"></div>
<div style="left:720.5px;top:706.8px;width:340.5px;height:30.6px;border:2px solid #9c9c9c;border-radius:3.5px;box-sizing:border-box;"></div>
<div class="t" style="left:700.8px;top:714.98px;width:380.5px;font-size:16px;line-height:18.12px;text-align:center;letter-spacing:-0.6px;color:#e6e6e6;">Deess</div>
<div style="left:695.5px;top:771.2px;width:390px;height:267.8px;background:#d9d9d9;border-radius:15px;"></div>
<div class="t" style="left:720.8px;top:775.88px;font-size:16px;line-height:18.12px;letter-spacing:-0.6px;color:#111;">VOLULME</div>
<div style="left:701.2px;top:796px;width:235.1px;height:237.8px;background:#151515;border-radius:12px;"></div>
<div style="left:942px;top:796px;width:138.7px;height:237.8px;background:#151515;border-radius:12px;"></div>
<div style="left:720.4px;top:805.7px;width:61px;height:66.4px;border:2px solid #9c9c9c;border-radius:3.5px;box-sizing:border-box;"></div>
<div class="t" style="left:711.2px;top:831.88px;width:80px;font-size:16px;line-height:18.12px;text-align:center;letter-spacing:-0.6px;color:#e6e6e6;">+</div>
<div style="left:720.4px;top:881.65px;width:61px;height:66.4px;border:2px solid #9c9c9c;border-radius:3.5px;box-sizing:border-box;"></div>
<div class="t" style="left:711.2px;top:907.83px;width:80px;font-size:16px;line-height:18.12px;text-align:center;letter-spacing:-0.6px;color:#e6e6e6;">0db</div>
<div style="left:720.4px;top:957.6px;width:61px;height:66.4px;border:2px solid #9c9c9c;border-radius:3.5px;box-sizing:border-box;"></div>
<div class="t" style="left:711.2px;top:983.78px;width:80px;font-size:16px;line-height:18.12px;text-align:center;letter-spacing:-0.6px;color:#e6e6e6;">-</div>
<div style="left:800.9px;top:806.2px;width:39.9px;height:217.8px;border:2px solid #e2e2e2;border-radius:5px;box-sizing:border-box;"></div>
<div style="left:804.6px;top:809.6px;width:32.6px;height:52.8px;background:#6b2a2c;border-radius:2px 2px 0 0;"></div>
<div style="left:804.6px;top:863.2px;width:32.6px;height:157.3px;background:#dadada;border-radius:0 0 2px 2px;"></div>
<div style="left:811px;top:866.2px;width:22px;height:2.2px;background:#151515;border-radius:1px;"></div>
<div style="left:850.9px;top:814.1px;width:32.1px;height:2.3px;background:#ff6b6b;border-radius:1px;"></div>
<div style="left:850.9px;top:824.2px;width:17px;height:2.1px;background:#6b2a2c;border-radius:1px;"></div>
<div style="left:850.9px;top:834.2px;width:17px;height:2.1px;background:#6b2a2c;border-radius:1px;"></div>
<div style="left:850.9px;top:844.2px;width:17px;height:2.1px;background:#6b2a2c;border-radius:1px;"></div>
<div style="left:850.9px;top:854.2px;width:17px;height:2.1px;background:#6b2a2c;border-radius:1px;"></div>
<div style="left:850.9px;top:864.1px;width:32.1px;height:2.3px;background:#e2e2e2;border-radius:1px;"></div>
<div style="left:850.9px;top:874.2px;width:17px;height:2.1px;background:#4a4a4a;border-radius:1px;"></div>
<div style="left:850.9px;top:884.2px;width:17px;height:2.1px;background:#4a4a4a;border-radius:1px;"></div>
<div style="left:850.9px;top:894.2px;width:17px;height:2.1px;background:#4a4a4a;border-radius:1px;"></div>
<div style="left:850.9px;top:904.2px;width:17px;height:2.1px;background:#4a4a4a;border-radius:1px;"></div>
<div style="left:850.9px;top:914.1px;width:32.1px;height:2.3px;background:#e2e2e2;border-radius:1px;"></div>
<div style="left:850.9px;top:924.2px;width:17px;height:2.1px;background:#4a4a4a;border-radius:1px;"></div>
<div style="left:850.9px;top:934.2px;width:17px;height:2.1px;background:#4a4a4a;border-radius:1px;"></div>
<div style="left:850.9px;top:944.2px;width:17px;height:2.1px;background:#4a4a4a;border-radius:1px;"></div>
<div style="left:850.9px;top:954.2px;width:17px;height:2.1px;background:#4a4a4a;border-radius:1px;"></div>
<div style="left:850.9px;top:964.1px;width:32.1px;height:2.3px;background:#e2e2e2;border-radius:1px;"></div>
<div style="left:850.9px;top:974.2px;width:17px;height:2.1px;background:#4a4a4a;border-radius:1px;"></div>
<div style="left:850.9px;top:984.2px;width:17px;height:2.1px;background:#4a4a4a;border-radius:1px;"></div>
<div style="left:850.9px;top:994.2px;width:17px;height:2.1px;background:#4a4a4a;border-radius:1px;"></div>
<div style="left:850.9px;top:1004.2px;width:17px;height:2.1px;background:#4a4a4a;border-radius:1px;"></div>
<div style="left:850.9px;top:1014.1px;width:32.1px;height:2.3px;background:#e2e2e2;border-radius:1px;"></div>
<div class="t" style="left:887.5px;top:856.48px;font-size:16px;line-height:18.12px;letter-spacing:-0.6px;color:#e6e6e6;">0</div>
<div class="t" style="left:887.5px;top:906.48px;font-size:16px;line-height:18.12px;letter-spacing:-0.6px;color:#e6e6e6;">-5</div>
<div class="t" style="left:887.5px;top:956.48px;font-size:16px;line-height:18.12px;letter-spacing:-0.6px;color:#e6e6e6;">-10</div>
<div class="t" style="left:887.5px;top:1006.48px;font-size:16px;line-height:18.12px;letter-spacing:-0.6px;color:#e6e6e6;">-15</div>
<div class="t" style="left:966.7px;top:807.98px;width:30px;font-size:16px;line-height:18.12px;text-align:center;letter-spacing:-0.6px;color:#e6e6e6;">L</div>
<div class="t" style="left:1025.7px;top:807.98px;width:30px;font-size:16px;line-height:18.12px;text-align:center;letter-spacing:-0.6px;color:#e6e6e6;">R</div>
<div style="left:960.9px;top:833.5px;width:41.4px;height:10.8px;border:2px solid #bd4e4e;border-radius:4px;box-sizing:border-box;"></div>
<div style="left:960.9px;top:845.58px;width:41.4px;height:10.8px;border:2px solid #bd4e4e;border-radius:4px;box-sizing:border-box;"></div>
<div style="left:960.9px;top:857.66px;width:41.4px;height:10.8px;border:2px solid #b68e48;border-radius:4px;box-sizing:border-box;"></div>
<div style="left:960.9px;top:869.74px;width:41.4px;height:10.8px;border:2px solid #b68e48;border-radius:4px;box-sizing:border-box;"></div>
<div style="left:960.9px;top:881.82px;width:41.4px;height:10.8px;border:2px solid #b68e48;border-radius:4px;box-sizing:border-box;"></div>
<div style="left:960.9px;top:893.9px;width:41.4px;height:10.8px;border:2px solid #b68e48;border-radius:4px;box-sizing:border-box;"></div>
<div style="left:960.9px;top:905.98px;width:41.4px;height:10.8px;border:2px solid #4aa55a;border-radius:4px;box-sizing:border-box;"></div>
<div style="left:960.9px;top:918.06px;width:41.4px;height:10.8px;border:2px solid #4aa55a;border-radius:4px;box-sizing:border-box;"></div>
<div style="left:960.9px;top:930.14px;width:41.4px;height:10.8px;background:#6cff84;border-radius:4px;box-sizing:border-box;"></div>
<div style="left:960.9px;top:942.22px;width:41.4px;height:10.8px;background:#6cff84;border-radius:4px;box-sizing:border-box;"></div>
<div style="left:960.9px;top:954.3px;width:41.4px;height:10.8px;background:#6cff84;border-radius:4px;box-sizing:border-box;"></div>
<div style="left:960.9px;top:966.38px;width:41.4px;height:10.8px;background:#6cff84;border-radius:4px;box-sizing:border-box;"></div>
<div style="left:960.9px;top:978.46px;width:41.4px;height:10.8px;background:#6cff84;border-radius:4px;box-sizing:border-box;"></div>
<div style="left:960.9px;top:990.54px;width:41.4px;height:10.8px;background:#6cff84;border-radius:4px;box-sizing:border-box;"></div>
<div style="left:960.9px;top:1002.62px;width:41.4px;height:10.8px;background:#6cff84;border-radius:4px;box-sizing:border-box;"></div>
<div style="left:960.9px;top:1014.7px;width:41.4px;height:10.8px;background:#6cff84;border-radius:4px;box-sizing:border-box;"></div>
<div style="left:1020px;top:833.5px;width:41.4px;height:10.8px;border:2px solid #bd4e4e;border-radius:4px;box-sizing:border-box;"></div>
<div style="left:1020px;top:845.58px;width:41.4px;height:10.8px;border:2px solid #bd4e4e;border-radius:4px;box-sizing:border-box;"></div>
<div style="left:1020px;top:857.66px;width:41.4px;height:10.8px;border:2px solid #b68e48;border-radius:4px;box-sizing:border-box;"></div>
<div style="left:1020px;top:869.74px;width:41.4px;height:10.8px;border:2px solid #b68e48;border-radius:4px;box-sizing:border-box;"></div>
<div style="left:1020px;top:881.82px;width:41.4px;height:10.8px;border:2px solid #b68e48;border-radius:4px;box-sizing:border-box;"></div>
<div style="left:1020px;top:893.9px;width:41.4px;height:10.8px;border:2px solid #b68e48;border-radius:4px;box-sizing:border-box;"></div>
<div style="left:1020px;top:905.98px;width:41.4px;height:10.8px;border:2px solid #4aa55a;border-radius:4px;box-sizing:border-box;"></div>
<div style="left:1020px;top:918.06px;width:41.4px;height:10.8px;border:2px solid #4aa55a;border-radius:4px;box-sizing:border-box;"></div>
<div style="left:1020px;top:930.14px;width:41.4px;height:10.8px;background:#6cff84;border-radius:4px;box-sizing:border-box;"></div>
<div style="left:1020px;top:942.22px;width:41.4px;height:10.8px;background:#6cff84;border-radius:4px;box-sizing:border-box;"></div>
<div style="left:1020px;top:954.3px;width:41.4px;height:10.8px;background:#6cff84;border-radius:4px;box-sizing:border-box;"></div>
<div style="left:1020px;top:966.38px;width:41.4px;height:10.8px;background:#6cff84;border-radius:4px;box-sizing:border-box;"></div>
<div style="left:1020px;top:978.46px;width:41.4px;height:10.8px;background:#6cff84;border-radius:4px;box-sizing:border-box;"></div>
<div style="left:1020px;top:990.54px;width:41.4px;height:10.8px;background:#6cff84;border-radius:4px;box-sizing:border-box;"></div>
<div style="left:1020px;top:1002.62px;width:41.4px;height:10.8px;background:#6cff84;border-radius:4px;box-sizing:border-box;"></div>
<div style="left:1020px;top:1014.7px;width:41.4px;height:10.8px;background:#6cff84;border-radius:4px;box-sizing:border-box;"></div>
<div style="left:1121.4px;top:81px;width:450.2px;height:997px;background:#6cff84;"></div>
<div style="left:1119.6px;top:79.7px;width:1.8px;height:1000px;background:#0c0c0c;"></div>
<div style="left:1131.7px;top:86.4px;width:264px;height:29.2px;background:#151515;border-radius:3px;"></div>
<div class="t" style="left:1132px;top:93.68px;width:264px;font-size:16px;line-height:18.12px;text-align:center;letter-spacing:-0.6px;color:#e6e6e6;">Track 4</div>
<div style="left:1406.6px;top:86.4px;width:74px;height:29.2px;background:#151515;border-radius:3px;"></div>
<div class="t" style="left:1406.9px;top:93.68px;width:74px;font-size:16px;line-height:18.12px;text-align:center;letter-spacing:-0.6px;color:#e6e6e6;">Mute</div>
<div style="left:1486.6px;top:86.4px;width:74px;height:29.2px;background:#151515;border-radius:3px;"></div>
<div class="t" style="left:1486.9px;top:93.68px;width:74px;font-size:16px;line-height:18.12px;text-align:center;letter-spacing:-0.6px;color:#e6e6e6;">Solo</div>
<div style="left:1121.4px;top:121px;width:450.2px;height:1.6px;background:#0c0c0c;"></div>
<div style="left:1132px;top:122.5px;width:429px;height:936.2px;background:#151515;border-radius:0 0 15px 15px;"></div>
<div style="left:1150.7px;top:122.5px;width:390px;height:67.6px;border:6px solid #e2e2e2;border-top:0;border-radius:0 0 15.5px 15.5px;box-sizing:border-box;"></div>
<div style="left:1156.7px;top:128.8px;width:378px;height:1.5px;background:#9a9a9a;"></div>
<div style="left:1150.7px;top:209.6px;width:390px;height:541.1px;background:#d9d9d9;border-radius:15px;"></div>
<div class="t" style="left:1175.9px;top:213.98px;font-size:16px;line-height:18.12px;letter-spacing:-0.6px;color:#111;">SETTINGS</div>
<div style="left:1155.9px;top:236.8px;width:379px;height:79.8px;background:#151515;border-radius:12px;"></div>
<div class="t" style="left:1175.5px;top:244.48px;font-size:16px;line-height:18.12px;letter-spacing:-0.6px;color:#e6e6e6;">Con&#xFB01;guration</div>
<div style="left:1176.2px;top:267px;width:339.5px;height:1.8px;background:#9a9a9a;"></div>
<div style="left:1175.7px;top:277.4px;width:160.65px;height:30.6px;border:2px solid #9c9c9c;border-radius:3.5px;box-sizing:border-box;"></div>
<div class="t" style="left:1156px;top:285.58px;width:200.65px;font-size:16px;line-height:18.12px;text-align:center;letter-spacing:-0.6px;color:#e6e6e6;">Save</div>
<div style="left:1355.55px;top:277.4px;width:160.65px;height:30.6px;border:2px solid #9c9c9c;border-radius:3.5px;box-sizing:border-box;"></div>
<div class="t" style="left:1335.85px;top:285.58px;width:200.65px;font-size:16px;line-height:18.12px;text-align:center;letter-spacing:-0.6px;color:#e6e6e6;">Load</div>
<div style="left:1155.9px;top:322.3px;width:379px;height:79.8px;background:#151515;border-radius:12px;"></div>
<div class="t" style="left:1175.5px;top:329.98px;font-size:16px;line-height:18.12px;letter-spacing:-0.6px;color:#e6e6e6;">Preset</div>
<div style="left:1176.2px;top:352.5px;width:339.5px;height:1.8px;background:#9a9a9a;"></div>
<div style="left:1175.7px;top:361.1px;width:340.5px;height:30.6px;border:2px solid #9c9c9c;border-radius:3.5px;box-sizing:border-box;"></div>
<div style="left:1205.1px;top:361.1px;width:2px;height:30.6px;background:#8a8a8a;"></div>
<svg class="a" style="left:1185.1px;top:372.5px" width="13" height="11" viewBox="0 0 13 11"><path d="M0.3 0.3H12.7L6.5 10.7Z" fill="#e2e2e2"/></svg>
<div class="t" style="left:1216.7px;top:369.88px;font-size:16px;line-height:18.12px;letter-spacing:-0.6px;color:#e6e6e6;">Preset</div>
<div style="left:1155.9px;top:407.5px;width:379px;height:79.8px;background:#151515;border-radius:12px;"></div>
<div class="t" style="left:1175.5px;top:415.18px;font-size:16px;line-height:18.12px;letter-spacing:-0.6px;color:#e6e6e6;">AI</div>
<div style="left:1176.2px;top:437.7px;width:339.5px;height:1.8px;background:#9a9a9a;"></div>
<div style="left:1175.7px;top:448.1px;width:100.7px;height:30.6px;background:#6aa6ff;border-radius:3px;"></div>
<div class="t" style="left:1156px;top:456.28px;width:140.7px;font-size:16px;line-height:18.12px;text-align:center;letter-spacing:-0.6px;color:#111;">Soft</div>
<div style="left:1295.6px;top:448.1px;width:100.7px;height:30.6px;border:2px solid #9c9c9c;border-radius:3.5px;box-sizing:border-box;"></div>
<div class="t" style="left:1275.9px;top:456.28px;width:140.7px;font-size:16px;line-height:18.12px;text-align:center;letter-spacing:-0.6px;color:#e6e6e6;">Medium</div>
<div style="left:1415.5px;top:448.1px;width:100.7px;height:30.6px;border:2px solid #9c9c9c;border-radius:3.5px;box-sizing:border-box;"></div>
<div class="t" style="left:1395.8px;top:456.28px;width:140.7px;font-size:16px;line-height:18.12px;text-align:center;letter-spacing:-0.6px;color:#e6e6e6;">High</div>
<div style="left:1155.9px;top:494.1px;width:379px;height:79.8px;background:#151515;border-radius:12px;"></div>
<div class="t" style="left:1175.5px;top:501.78px;font-size:16px;line-height:18.12px;letter-spacing:-0.6px;color:#e6e6e6;">Dyn</div>
<div style="left:1176.2px;top:524.3px;width:339.5px;height:1.8px;background:#9a9a9a;"></div>
<div style="left:1175.7px;top:534.7px;width:160.65px;height:30.6px;border:2px solid #9c9c9c;border-radius:3.5px;box-sizing:border-box;"></div>
<div class="t" style="left:1156px;top:542.88px;width:200.65px;font-size:16px;line-height:18.12px;text-align:center;letter-spacing:-0.6px;color:#e6e6e6;">Clean</div>
<div style="left:1355.55px;top:534.7px;width:160.65px;height:30.6px;background:#ff6b6b;border-radius:3px;"></div>
<div class="t" style="left:1335.85px;top:542.88px;width:200.65px;font-size:16px;line-height:18.12px;text-align:center;letter-spacing:-0.6px;color:#111;">Disto</div>
<div style="left:1155.9px;top:579.6px;width:379px;height:79.8px;background:#151515;border-radius:12px;"></div>
<div class="t" style="left:1175.5px;top:587.28px;font-size:16px;line-height:18.12px;letter-spacing:-0.6px;color:#e6e6e6;">Color</div>
<div style="left:1176.2px;top:609.8px;width:339.5px;height:1.8px;background:#9a9a9a;"></div>
<div style="left:1175.7px;top:620.2px;width:70.72px;height:30.6px;background:#6cffff;border-radius:3px;"></div>
<div class="t" style="left:1156px;top:628.38px;width:110.72px;font-size:16px;line-height:18.12px;text-align:center;letter-spacing:-0.6px;color:#111;">Ice</div>
<div style="left:1265.62px;top:620.2px;width:70.72px;height:30.6px;border:2px solid #9c9c9c;border-radius:3.5px;box-sizing:border-box;"></div>
<div class="t" style="left:1245.92px;top:628.38px;width:110.72px;font-size:16px;line-height:18.12px;text-align:center;letter-spacing:-0.6px;color:#e6e6e6;">Cold</div>
<div style="left:1355.55px;top:620.2px;width:70.72px;height:30.6px;border:2px solid #9c9c9c;border-radius:3.5px;box-sizing:border-box;"></div>
<div class="t" style="left:1335.85px;top:628.38px;width:110.72px;font-size:16px;line-height:18.12px;text-align:center;letter-spacing:-0.6px;color:#e6e6e6;">Warm</div>
<div style="left:1445.47px;top:620.2px;width:70.72px;height:30.6px;border:2px solid #9c9c9c;border-radius:3.5px;box-sizing:border-box;"></div>
<div class="t" style="left:1425.77px;top:628.38px;width:110.72px;font-size:16px;line-height:18.12px;text-align:center;letter-spacing:-0.6px;color:#e6e6e6;">Hot</div>
<div style="left:1155.9px;top:666.2px;width:379px;height:79.8px;background:#151515;border-radius:12px;"></div>
<div class="t" style="left:1175.5px;top:673.88px;font-size:16px;line-height:18.12px;letter-spacing:-0.6px;color:#e6e6e6;">Voice</div>
<div style="left:1176.2px;top:696.4px;width:339.5px;height:1.8px;background:#9a9a9a;"></div>
<div style="left:1175.7px;top:706.8px;width:340.5px;height:30.6px;background:#6cff84;border-radius:3px;"></div>
<div class="t" style="left:1156px;top:714.98px;width:380.5px;font-size:16px;line-height:18.12px;text-align:center;letter-spacing:-0.6px;color:#111;">Deess</div>
<div style="left:1150.7px;top:771.2px;width:390px;height:267.8px;background:#d9d9d9;border-radius:15px;"></div>
<div class="t" style="left:1176px;top:775.88px;font-size:16px;line-height:18.12px;letter-spacing:-0.6px;color:#111;">VOLULME</div>
<div style="left:1156.4px;top:796px;width:235.1px;height:237.8px;background:#151515;border-radius:12px;"></div>
<div style="left:1397.2px;top:796px;width:138.7px;height:237.8px;background:#151515;border-radius:12px;"></div>
<div style="left:1175.6px;top:805.7px;width:61px;height:66.4px;border:2px solid #9c9c9c;border-radius:3.5px;box-sizing:border-box;"></div>
<div class="t" style="left:1166.4px;top:831.88px;width:80px;font-size:16px;line-height:18.12px;text-align:center;letter-spacing:-0.6px;color:#e6e6e6;">+</div>
<div style="left:1175.6px;top:881.65px;width:61px;height:66.4px;border:2px solid #9c9c9c;border-radius:3.5px;box-sizing:border-box;"></div>
<div class="t" style="left:1166.4px;top:907.83px;width:80px;font-size:16px;line-height:18.12px;text-align:center;letter-spacing:-0.6px;color:#e6e6e6;">-5db</div>
<div style="left:1175.6px;top:957.6px;width:61px;height:66.4px;border:2px solid #9c9c9c;border-radius:3.5px;box-sizing:border-box;"></div>
<div class="t" style="left:1166.4px;top:983.78px;width:80px;font-size:16px;line-height:18.12px;text-align:center;letter-spacing:-0.6px;color:#e6e6e6;">-</div>
<div style="left:1256.1px;top:806.2px;width:39.9px;height:217.8px;border:2px solid #e2e2e2;border-radius:5px;box-sizing:border-box;"></div>
<div style="left:1259.8px;top:809.6px;width:32.6px;height:56px;background:#6b2a2c;border-radius:2px 2px 0 0;"></div>
<div style="left:1259.8px;top:913.7px;width:32.6px;height:106.8px;background:#dadada;border-radius:0 0 2px 2px;"></div>
<div style="left:1266.2px;top:916.6px;width:22px;height:2.2px;background:#151515;border-radius:1px;"></div>
<div style="left:1306.1px;top:814.1px;width:32.1px;height:2.3px;background:#ff6b6b;border-radius:1px;"></div>
<div style="left:1306.1px;top:824.2px;width:17px;height:2.1px;background:#6b2a2c;border-radius:1px;"></div>
<div style="left:1306.1px;top:834.2px;width:17px;height:2.1px;background:#6b2a2c;border-radius:1px;"></div>
<div style="left:1306.1px;top:844.2px;width:17px;height:2.1px;background:#6b2a2c;border-radius:1px;"></div>
<div style="left:1306.1px;top:854.2px;width:17px;height:2.1px;background:#6b2a2c;border-radius:1px;"></div>
<div style="left:1306.1px;top:864.1px;width:32.1px;height:2.3px;background:#e2e2e2;border-radius:1px;"></div>
<div style="left:1306.1px;top:874.2px;width:17px;height:2.1px;background:#4a4a4a;border-radius:1px;"></div>
<div style="left:1306.1px;top:884.2px;width:17px;height:2.1px;background:#4a4a4a;border-radius:1px;"></div>
<div style="left:1306.1px;top:894.2px;width:17px;height:2.1px;background:#4a4a4a;border-radius:1px;"></div>
<div style="left:1306.1px;top:904.2px;width:17px;height:2.1px;background:#4a4a4a;border-radius:1px;"></div>
<div style="left:1306.1px;top:914.1px;width:32.1px;height:2.3px;background:#e2e2e2;border-radius:1px;"></div>
<div style="left:1306.1px;top:924.2px;width:17px;height:2.1px;background:#4a4a4a;border-radius:1px;"></div>
<div style="left:1306.1px;top:934.2px;width:17px;height:2.1px;background:#4a4a4a;border-radius:1px;"></div>
<div style="left:1306.1px;top:944.2px;width:17px;height:2.1px;background:#4a4a4a;border-radius:1px;"></div>
<div style="left:1306.1px;top:954.2px;width:17px;height:2.1px;background:#4a4a4a;border-radius:1px;"></div>
<div style="left:1306.1px;top:964.1px;width:32.1px;height:2.3px;background:#e2e2e2;border-radius:1px;"></div>
<div style="left:1306.1px;top:974.2px;width:17px;height:2.1px;background:#4a4a4a;border-radius:1px;"></div>
<div style="left:1306.1px;top:984.2px;width:17px;height:2.1px;background:#4a4a4a;border-radius:1px;"></div>
<div style="left:1306.1px;top:994.2px;width:17px;height:2.1px;background:#4a4a4a;border-radius:1px;"></div>
<div style="left:1306.1px;top:1004.2px;width:17px;height:2.1px;background:#4a4a4a;border-radius:1px;"></div>
<div style="left:1306.1px;top:1014.1px;width:32.1px;height:2.3px;background:#e2e2e2;border-radius:1px;"></div>
<div class="t" style="left:1342.7px;top:856.48px;font-size:16px;line-height:18.12px;letter-spacing:-0.6px;color:#e6e6e6;">0</div>
<div class="t" style="left:1342.7px;top:906.48px;font-size:16px;line-height:18.12px;letter-spacing:-0.6px;color:#e6e6e6;">-5</div>
<div class="t" style="left:1342.7px;top:956.48px;font-size:16px;line-height:18.12px;letter-spacing:-0.6px;color:#e6e6e6;">-10</div>
<div class="t" style="left:1342.7px;top:1006.48px;font-size:16px;line-height:18.12px;letter-spacing:-0.6px;color:#e6e6e6;">-15</div>
<div class="t" style="left:1421.9px;top:807.98px;width:30px;font-size:16px;line-height:18.12px;text-align:center;letter-spacing:-0.6px;color:#e6e6e6;">L</div>
<div class="t" style="left:1480.9px;top:807.98px;width:30px;font-size:16px;line-height:18.12px;text-align:center;letter-spacing:-0.6px;color:#e6e6e6;">R</div>
<div style="left:1416.1px;top:833.5px;width:41.4px;height:10.8px;border:2px solid #bd4e4e;border-radius:4px;box-sizing:border-box;"></div>
<div style="left:1416.1px;top:845.58px;width:41.4px;height:10.8px;border:2px solid #bd4e4e;border-radius:4px;box-sizing:border-box;"></div>
<div style="left:1416.1px;top:857.66px;width:41.4px;height:10.8px;border:2px solid #b68e48;border-radius:4px;box-sizing:border-box;"></div>
<div style="left:1416.1px;top:869.74px;width:41.4px;height:10.8px;border:2px solid #b68e48;border-radius:4px;box-sizing:border-box;"></div>
<div style="left:1416.1px;top:881.82px;width:41.4px;height:10.8px;border:2px solid #b68e48;border-radius:4px;box-sizing:border-box;"></div>
<div style="left:1416.1px;top:893.9px;width:41.4px;height:10.8px;border:2px solid #b68e48;border-radius:4px;box-sizing:border-box;"></div>
<div style="left:1416.1px;top:905.98px;width:41.4px;height:10.8px;border:2px solid #4aa55a;border-radius:4px;box-sizing:border-box;"></div>
<div style="left:1416.1px;top:918.06px;width:41.4px;height:10.8px;border:2px solid #4aa55a;border-radius:4px;box-sizing:border-box;"></div>
<div style="left:1416.1px;top:930.14px;width:41.4px;height:10.8px;background:#6cff84;border-radius:4px;box-sizing:border-box;"></div>
<div style="left:1416.1px;top:942.22px;width:41.4px;height:10.8px;background:#6cff84;border-radius:4px;box-sizing:border-box;"></div>
<div style="left:1416.1px;top:954.3px;width:41.4px;height:10.8px;background:#6cff84;border-radius:4px;box-sizing:border-box;"></div>
<div style="left:1416.1px;top:966.38px;width:41.4px;height:10.8px;background:#6cff84;border-radius:4px;box-sizing:border-box;"></div>
<div style="left:1416.1px;top:978.46px;width:41.4px;height:10.8px;background:#6cff84;border-radius:4px;box-sizing:border-box;"></div>
<div style="left:1416.1px;top:990.54px;width:41.4px;height:10.8px;background:#6cff84;border-radius:4px;box-sizing:border-box;"></div>
<div style="left:1416.1px;top:1002.62px;width:41.4px;height:10.8px;background:#6cff84;border-radius:4px;box-sizing:border-box;"></div>
<div style="left:1416.1px;top:1014.7px;width:41.4px;height:10.8px;background:#6cff84;border-radius:4px;box-sizing:border-box;"></div>
<div style="left:1475.2px;top:833.5px;width:41.4px;height:10.8px;border:2px solid #bd4e4e;border-radius:4px;box-sizing:border-box;"></div>
<div style="left:1475.2px;top:845.58px;width:41.4px;height:10.8px;border:2px solid #bd4e4e;border-radius:4px;box-sizing:border-box;"></div>
<div style="left:1475.2px;top:857.66px;width:41.4px;height:10.8px;border:2px solid #b68e48;border-radius:4px;box-sizing:border-box;"></div>
<div style="left:1475.2px;top:869.74px;width:41.4px;height:10.8px;border:2px solid #b68e48;border-radius:4px;box-sizing:border-box;"></div>
<div style="left:1475.2px;top:881.82px;width:41.4px;height:10.8px;border:2px solid #b68e48;border-radius:4px;box-sizing:border-box;"></div>
<div style="left:1475.2px;top:893.9px;width:41.4px;height:10.8px;border:2px solid #b68e48;border-radius:4px;box-sizing:border-box;"></div>
<div style="left:1475.2px;top:905.98px;width:41.4px;height:10.8px;border:2px solid #4aa55a;border-radius:4px;box-sizing:border-box;"></div>
<div style="left:1475.2px;top:918.06px;width:41.4px;height:10.8px;border:2px solid #4aa55a;border-radius:4px;box-sizing:border-box;"></div>
<div style="left:1475.2px;top:930.14px;width:41.4px;height:10.8px;background:#6cff84;border-radius:4px;box-sizing:border-box;"></div>
<div style="left:1475.2px;top:942.22px;width:41.4px;height:10.8px;background:#6cff84;border-radius:4px;box-sizing:border-box;"></div>
<div style="left:1475.2px;top:954.3px;width:41.4px;height:10.8px;background:#6cff84;border-radius:4px;box-sizing:border-box;"></div>
<div style="left:1475.2px;top:966.38px;width:41.4px;height:10.8px;background:#6cff84;border-radius:4px;box-sizing:border-box;"></div>
<div style="left:1475.2px;top:978.46px;width:41.4px;height:10.8px;background:#6cff84;border-radius:4px;box-sizing:border-box;"></div>
<div style="left:1475.2px;top:990.54px;width:41.4px;height:10.8px;background:#6cff84;border-radius:4px;box-sizing:border-box;"></div>
<div style="left:1475.2px;top:1002.62px;width:41.4px;height:10.8px;background:#6cff84;border-radius:4px;box-sizing:border-box;"></div>
<div style="left:1475.2px;top:1014.7px;width:41.4px;height:10.8px;background:#6cff84;border-radius:4px;box-sizing:border-box;"></div>
<div style="left:1572.6px;top:81px;width:450.2px;height:997px;background:#6cffff;"></div>
<div style="left:1570.8px;top:79.7px;width:1.8px;height:1000px;background:#0c0c0c;"></div>
<div style="left:1582.9px;top:86.4px;width:264px;height:29.2px;background:#151515;border-radius:3px;"></div>
<div class="t" style="left:1583.2px;top:93.68px;width:264px;font-size:16px;line-height:18.12px;text-align:center;letter-spacing:-0.6px;color:#e6e6e6;">Track 5</div>
<div style="left:1857.8px;top:86.4px;width:74px;height:29.2px;background:#151515;border-radius:3px;"></div>
<div class="t" style="left:1858.1px;top:93.68px;width:74px;font-size:16px;line-height:18.12px;text-align:center;letter-spacing:-0.6px;color:#e6e6e6;">Mute</div>
<div style="left:1937.8px;top:86.4px;width:74px;height:29.2px;background:#151515;border-radius:3px;"></div>
<div class="t" style="left:1938.1px;top:93.68px;width:74px;font-size:16px;line-height:18.12px;text-align:center;letter-spacing:-0.6px;color:#e6e6e6;">Solo</div>
<div style="left:1572.6px;top:121px;width:450.2px;height:1.6px;background:#0c0c0c;"></div>
<div style="left:1583.2px;top:122.5px;width:429px;height:936.2px;background:#151515;border-radius:0 0 15px 15px;"></div>
<div style="left:1601.9px;top:122.5px;width:390px;height:67.6px;border:6px solid #e2e2e2;border-top:0;border-radius:0 0 15.5px 15.5px;box-sizing:border-box;"></div>
<div style="left:1607.9px;top:128.8px;width:378px;height:1.5px;background:#9a9a9a;"></div>
<div style="left:1601.9px;top:209.6px;width:390px;height:541.1px;background:#d9d9d9;border-radius:15px;"></div>
<div class="t" style="left:1627.1px;top:213.98px;font-size:16px;line-height:18.12px;letter-spacing:-0.6px;color:#111;">SETTINGS</div>
<div style="left:1607.1px;top:236.8px;width:379px;height:79.8px;background:#151515;border-radius:12px;"></div>
<div class="t" style="left:1626.7px;top:244.48px;font-size:16px;line-height:18.12px;letter-spacing:-0.6px;color:#e6e6e6;">Con&#xFB01;guration</div>
<div style="left:1627.4px;top:267px;width:339.5px;height:1.8px;background:#9a9a9a;"></div>
<div style="left:1626.9px;top:277.4px;width:160.65px;height:30.6px;border:2px solid #9c9c9c;border-radius:3.5px;box-sizing:border-box;"></div>
<div class="t" style="left:1607.2px;top:285.58px;width:200.65px;font-size:16px;line-height:18.12px;text-align:center;letter-spacing:-0.6px;color:#e6e6e6;">Save</div>
<div style="left:1806.75px;top:277.4px;width:160.65px;height:30.6px;border:2px solid #9c9c9c;border-radius:3.5px;box-sizing:border-box;"></div>
<div class="t" style="left:1787.05px;top:285.58px;width:200.65px;font-size:16px;line-height:18.12px;text-align:center;letter-spacing:-0.6px;color:#e6e6e6;">Load</div>
<div style="left:1607.1px;top:322.3px;width:379px;height:79.8px;background:#151515;border-radius:12px;"></div>
<div class="t" style="left:1626.7px;top:329.98px;font-size:16px;line-height:18.12px;letter-spacing:-0.6px;color:#e6e6e6;">Preset</div>
<div style="left:1627.4px;top:352.5px;width:339.5px;height:1.8px;background:#9a9a9a;"></div>
<div style="left:1626.9px;top:361.1px;width:340.5px;height:30.6px;border:2px solid #9c9c9c;border-radius:3.5px;box-sizing:border-box;"></div>
<div style="left:1656.3px;top:361.1px;width:2px;height:30.6px;background:#8a8a8a;"></div>
<svg class="a" style="left:1636.3px;top:372.5px" width="13" height="11" viewBox="0 0 13 11"><path d="M0.3 0.3H12.7L6.5 10.7Z" fill="#e2e2e2"/></svg>
<div class="t" style="left:1667.9px;top:369.88px;font-size:16px;line-height:18.12px;letter-spacing:-0.6px;color:#e6e6e6;">Preset</div>
<div style="left:1607.1px;top:407.5px;width:379px;height:79.8px;background:#151515;border-radius:12px;"></div>
<div class="t" style="left:1626.7px;top:415.18px;font-size:16px;line-height:18.12px;letter-spacing:-0.6px;color:#e6e6e6;">AI</div>
<div style="left:1627.4px;top:437.7px;width:339.5px;height:1.8px;background:#9a9a9a;"></div>
<div style="left:1626.9px;top:448.1px;width:100.7px;height:30.6px;border:2px solid #9c9c9c;border-radius:3.5px;box-sizing:border-box;"></div>
<div class="t" style="left:1607.2px;top:456.28px;width:140.7px;font-size:16px;line-height:18.12px;text-align:center;letter-spacing:-0.6px;color:#e6e6e6;">Soft</div>
<div style="left:1746.8px;top:448.1px;width:100.7px;height:30.6px;border:2px solid #9c9c9c;border-radius:3.5px;box-sizing:border-box;"></div>
<div class="t" style="left:1727.1px;top:456.28px;width:140.7px;font-size:16px;line-height:18.12px;text-align:center;letter-spacing:-0.6px;color:#e6e6e6;">Medium</div>
<div style="left:1866.7px;top:448.1px;width:100.7px;height:30.6px;background:#ff6b6b;border-radius:3px;"></div>
<div class="t" style="left:1847px;top:456.28px;width:140.7px;font-size:16px;line-height:18.12px;text-align:center;letter-spacing:-0.6px;color:#111;">High</div>
<div style="left:1607.1px;top:494.1px;width:379px;height:79.8px;background:#151515;border-radius:12px;"></div>
<div class="t" style="left:1626.7px;top:501.78px;font-size:16px;line-height:18.12px;letter-spacing:-0.6px;color:#e6e6e6;">Dyn</div>
<div style="left:1627.4px;top:524.3px;width:339.5px;height:1.8px;background:#9a9a9a;"></div>
<div style="left:1626.9px;top:534.7px;width:160.65px;height:30.6px;background:#6aa6ff;border-radius:3px;"></div>
<div class="t" style="left:1607.2px;top:542.88px;width:200.65px;font-size:16px;line-height:18.12px;text-align:center;letter-spacing:-0.6px;color:#111;">Clean</div>
<div style="left:1806.75px;top:534.7px;width:160.65px;height:30.6px;border:2px solid #9c9c9c;border-radius:3.5px;box-sizing:border-box;"></div>
<div class="t" style="left:1787.05px;top:542.88px;width:200.65px;font-size:16px;line-height:18.12px;text-align:center;letter-spacing:-0.6px;color:#e6e6e6;">Disto</div>
<div style="left:1607.1px;top:579.6px;width:379px;height:79.8px;background:#151515;border-radius:12px;"></div>
<div class="t" style="left:1626.7px;top:587.28px;font-size:16px;line-height:18.12px;letter-spacing:-0.6px;color:#e6e6e6;">Color</div>
<div style="left:1627.4px;top:609.8px;width:339.5px;height:1.8px;background:#9a9a9a;"></div>
<div style="left:1626.9px;top:620.2px;width:70.72px;height:30.6px;border:2px solid #9c9c9c;border-radius:3.5px;box-sizing:border-box;"></div>
<div class="t" style="left:1607.2px;top:628.38px;width:110.72px;font-size:16px;line-height:18.12px;text-align:center;letter-spacing:-0.6px;color:#e6e6e6;">Ice</div>
<div style="left:1716.83px;top:620.2px;width:70.72px;height:30.6px;border:2px solid #9c9c9c;border-radius:3.5px;box-sizing:border-box;"></div>
<div class="t" style="left:1697.12px;top:628.38px;width:110.72px;font-size:16px;line-height:18.12px;text-align:center;letter-spacing:-0.6px;color:#e6e6e6;">Cold</div>
<div style="left:1806.75px;top:620.2px;width:70.72px;height:30.6px;background:#ffd066;border-radius:3px;"></div>
<div class="t" style="left:1787.05px;top:628.38px;width:110.72px;font-size:16px;line-height:18.12px;text-align:center;letter-spacing:-0.6px;color:#111;">Warm</div>
<div style="left:1896.68px;top:620.2px;width:70.72px;height:30.6px;border:2px solid #9c9c9c;border-radius:3.5px;box-sizing:border-box;"></div>
<div class="t" style="left:1876.98px;top:628.38px;width:110.72px;font-size:16px;line-height:18.12px;text-align:center;letter-spacing:-0.6px;color:#e6e6e6;">Hot</div>
<div style="left:1607.1px;top:666.2px;width:379px;height:79.8px;background:#151515;border-radius:12px;"></div>
<div class="t" style="left:1626.7px;top:673.88px;font-size:16px;line-height:18.12px;letter-spacing:-0.6px;color:#e6e6e6;">Voice</div>
<div style="left:1627.4px;top:696.4px;width:339.5px;height:1.8px;background:#9a9a9a;"></div>
<div style="left:1626.9px;top:706.8px;width:340.5px;height:30.6px;background:#6cff84;border-radius:3px;"></div>
<div class="t" style="left:1607.2px;top:714.98px;width:380.5px;font-size:16px;line-height:18.12px;text-align:center;letter-spacing:-0.6px;color:#111;">Deess</div>
<div style="left:1601.9px;top:771.2px;width:390px;height:267.8px;background:#d9d9d9;border-radius:15px;"></div>
<div class="t" style="left:1627.2px;top:775.88px;font-size:16px;line-height:18.12px;letter-spacing:-0.6px;color:#111;">VOLULME</div>
<div style="left:1607.6px;top:796px;width:235.1px;height:237.8px;background:#151515;border-radius:12px;"></div>
<div style="left:1848.4px;top:796px;width:138.7px;height:237.8px;background:#151515;border-radius:12px;"></div>
<div style="left:1626.8px;top:805.7px;width:61px;height:66.4px;border:2px solid #9c9c9c;border-radius:3.5px;box-sizing:border-box;"></div>
<div class="t" style="left:1617.6px;top:831.88px;width:80px;font-size:16px;line-height:18.12px;text-align:center;letter-spacing:-0.6px;color:#e6e6e6;">+</div>
<div style="left:1626.8px;top:881.65px;width:61px;height:66.4px;border:2px solid #9c9c9c;border-radius:3.5px;box-sizing:border-box;"></div>
<div class="t" style="left:1617.6px;top:907.83px;width:80px;font-size:16px;line-height:18.12px;text-align:center;letter-spacing:-0.6px;color:#e6e6e6;">0db</div>
<div style="left:1626.8px;top:957.6px;width:61px;height:66.4px;border:2px solid #9c9c9c;border-radius:3.5px;box-sizing:border-box;"></div>
<div class="t" style="left:1617.6px;top:983.78px;width:80px;font-size:16px;line-height:18.12px;text-align:center;letter-spacing:-0.6px;color:#e6e6e6;">-</div>
<div style="left:1707.3px;top:806.2px;width:39.9px;height:217.8px;border:2px solid #e2e2e2;border-radius:5px;box-sizing:border-box;"></div>
<div style="left:1711px;top:809.6px;width:32.6px;height:52.8px;background:#6b2a2c;border-radius:2px 2px 0 0;"></div>
<div style="left:1711px;top:863.2px;width:32.6px;height:157.3px;background:#dadada;border-radius:0 0 2px 2px;"></div>
<div style="left:1717.4px;top:866.2px;width:22px;height:2.2px;background:#151515;border-radius:1px;"></div>
<div style="left:1757.3px;top:814.1px;width:32.1px;height:2.3px;background:#ff6b6b;border-radius:1px;"></div>
<div style="left:1757.3px;top:824.2px;width:17px;height:2.1px;background:#6b2a2c;border-radius:1px;"></div>
<div style="left:1757.3px;top:834.2px;width:17px;height:2.1px;background:#6b2a2c;border-radius:1px;"></div>
<div style="left:1757.3px;top:844.2px;width:17px;height:2.1px;background:#6b2a2c;border-radius:1px;"></div>
<div style="left:1757.3px;top:854.2px;width:17px;height:2.1px;background:#6b2a2c;border-radius:1px;"></div>
<div style="left:1757.3px;top:864.1px;width:32.1px;height:2.3px;background:#e2e2e2;border-radius:1px;"></div>
<div style="left:1757.3px;top:874.2px;width:17px;height:2.1px;background:#4a4a4a;border-radius:1px;"></div>
<div style="left:1757.3px;top:884.2px;width:17px;height:2.1px;background:#4a4a4a;border-radius:1px;"></div>
<div style="left:1757.3px;top:894.2px;width:17px;height:2.1px;background:#4a4a4a;border-radius:1px;"></div>
<div style="left:1757.3px;top:904.2px;width:17px;height:2.1px;background:#4a4a4a;border-radius:1px;"></div>
<div style="left:1757.3px;top:914.1px;width:32.1px;height:2.3px;background:#e2e2e2;border-radius:1px;"></div>
<div style="left:1757.3px;top:924.2px;width:17px;height:2.1px;background:#4a4a4a;border-radius:1px;"></div>
<div style="left:1757.3px;top:934.2px;width:17px;height:2.1px;background:#4a4a4a;border-radius:1px;"></div>
<div style="left:1757.3px;top:944.2px;width:17px;height:2.1px;background:#4a4a4a;border-radius:1px;"></div>
<div style="left:1757.3px;top:954.2px;width:17px;height:2.1px;background:#4a4a4a;border-radius:1px;"></div>
<div style="left:1757.3px;top:964.1px;width:32.1px;height:2.3px;background:#e2e2e2;border-radius:1px;"></div>
<div style="left:1757.3px;top:974.2px;width:17px;height:2.1px;background:#4a4a4a;border-radius:1px;"></div>
<div style="left:1757.3px;top:984.2px;width:17px;height:2.1px;background:#4a4a4a;border-radius:1px;"></div>
<div style="left:1757.3px;top:994.2px;width:17px;height:2.1px;background:#4a4a4a;border-radius:1px;"></div>
<div style="left:1757.3px;top:1004.2px;width:17px;height:2.1px;background:#4a4a4a;border-radius:1px;"></div>
<div style="left:1757.3px;top:1014.1px;width:32.1px;height:2.3px;background:#e2e2e2;border-radius:1px;"></div>
<div class="t" style="left:1793.9px;top:856.48px;font-size:16px;line-height:18.12px;letter-spacing:-0.6px;color:#e6e6e6;">0</div>
<div class="t" style="left:1793.9px;top:906.48px;font-size:16px;line-height:18.12px;letter-spacing:-0.6px;color:#e6e6e6;">-5</div>
<div class="t" style="left:1793.9px;top:956.48px;font-size:16px;line-height:18.12px;letter-spacing:-0.6px;color:#e6e6e6;">-10</div>
<div class="t" style="left:1793.9px;top:1006.48px;font-size:16px;line-height:18.12px;letter-spacing:-0.6px;color:#e6e6e6;">-15</div>
<div class="t" style="left:1873.1px;top:807.98px;width:30px;font-size:16px;line-height:18.12px;text-align:center;letter-spacing:-0.6px;color:#e6e6e6;">L</div>
<div class="t" style="left:1932.1px;top:807.98px;width:30px;font-size:16px;line-height:18.12px;text-align:center;letter-spacing:-0.6px;color:#e6e6e6;">R</div>
<div style="left:1867.3px;top:833.5px;width:41.4px;height:10.8px;border:2px solid #bd4e4e;border-radius:4px;box-sizing:border-box;"></div>
<div style="left:1867.3px;top:845.58px;width:41.4px;height:10.8px;border:2px solid #bd4e4e;border-radius:4px;box-sizing:border-box;"></div>
<div style="left:1867.3px;top:857.66px;width:41.4px;height:10.8px;border:2px solid #b68e48;border-radius:4px;box-sizing:border-box;"></div>
<div style="left:1867.3px;top:869.74px;width:41.4px;height:10.8px;border:2px solid #b68e48;border-radius:4px;box-sizing:border-box;"></div>
<div style="left:1867.3px;top:881.82px;width:41.4px;height:10.8px;border:2px solid #b68e48;border-radius:4px;box-sizing:border-box;"></div>
<div style="left:1867.3px;top:893.9px;width:41.4px;height:10.8px;border:2px solid #b68e48;border-radius:4px;box-sizing:border-box;"></div>
<div style="left:1867.3px;top:905.98px;width:41.4px;height:10.8px;border:2px solid #4aa55a;border-radius:4px;box-sizing:border-box;"></div>
<div style="left:1867.3px;top:918.06px;width:41.4px;height:10.8px;border:2px solid #4aa55a;border-radius:4px;box-sizing:border-box;"></div>
<div style="left:1867.3px;top:930.14px;width:41.4px;height:10.8px;background:#6cff84;border-radius:4px;box-sizing:border-box;"></div>
<div style="left:1867.3px;top:942.22px;width:41.4px;height:10.8px;background:#6cff84;border-radius:4px;box-sizing:border-box;"></div>
<div style="left:1867.3px;top:954.3px;width:41.4px;height:10.8px;background:#6cff84;border-radius:4px;box-sizing:border-box;"></div>
<div style="left:1867.3px;top:966.38px;width:41.4px;height:10.8px;background:#6cff84;border-radius:4px;box-sizing:border-box;"></div>
<div style="left:1867.3px;top:978.46px;width:41.4px;height:10.8px;background:#6cff84;border-radius:4px;box-sizing:border-box;"></div>
<div style="left:1867.3px;top:990.54px;width:41.4px;height:10.8px;background:#6cff84;border-radius:4px;box-sizing:border-box;"></div>
<div style="left:1867.3px;top:1002.62px;width:41.4px;height:10.8px;background:#6cff84;border-radius:4px;box-sizing:border-box;"></div>
<div style="left:1867.3px;top:1014.7px;width:41.4px;height:10.8px;background:#6cff84;border-radius:4px;box-sizing:border-box;"></div>
<div style="left:1926.4px;top:833.5px;width:41.4px;height:10.8px;border:2px solid #bd4e4e;border-radius:4px;box-sizing:border-box;"></div>
<div style="left:1926.4px;top:845.58px;width:41.4px;height:10.8px;border:2px solid #bd4e4e;border-radius:4px;box-sizing:border-box;"></div>
<div style="left:1926.4px;top:857.66px;width:41.4px;height:10.8px;border:2px solid #b68e48;border-radius:4px;box-sizing:border-box;"></div>
<div style="left:1926.4px;top:869.74px;width:41.4px;height:10.8px;border:2px solid #b68e48;border-radius:4px;box-sizing:border-box;"></div>
<div style="left:1926.4px;top:881.82px;width:41.4px;height:10.8px;border:2px solid #b68e48;border-radius:4px;box-sizing:border-box;"></div>
<div style="left:1926.4px;top:893.9px;width:41.4px;height:10.8px;border:2px solid #b68e48;border-radius:4px;box-sizing:border-box;"></div>
<div style="left:1926.4px;top:905.98px;width:41.4px;height:10.8px;border:2px solid #4aa55a;border-radius:4px;box-sizing:border-box;"></div>
<div style="left:1926.4px;top:918.06px;width:41.4px;height:10.8px;border:2px solid #4aa55a;border-radius:4px;box-sizing:border-box;"></div>
<div style="left:1926.4px;top:930.14px;width:41.4px;height:10.8px;background:#6cff84;border-radius:4px;box-sizing:border-box;"></div>
<div style="left:1926.4px;top:942.22px;width:41.4px;height:10.8px;background:#6cff84;border-radius:4px;box-sizing:border-box;"></div>
<div style="left:1926.4px;top:954.3px;width:41.4px;height:10.8px;background:#6cff84;border-radius:4px;box-sizing:border-box;"></div>
<div style="left:1926.4px;top:966.38px;width:41.4px;height:10.8px;background:#6cff84;border-radius:4px;box-sizing:border-box;"></div>
<div style="left:1926.4px;top:978.46px;width:41.4px;height:10.8px;background:#6cff84;border-radius:4px;box-sizing:border-box;"></div>
<div style="left:1926.4px;top:990.54px;width:41.4px;height:10.8px;background:#6cff84;border-radius:4px;box-sizing:border-box;"></div>
<div style="left:1926.4px;top:1002.62px;width:41.4px;height:10.8px;background:#6cff84;border-radius:4px;box-sizing:border-box;"></div>
<div style="left:1926.4px;top:1014.7px;width:41.4px;height:10.8px;background:#6cff84;border-radius:4px;box-sizing:border-box;"></div>
<div style="left:0px;top:0px;width:1917px;height:78.5px;background:#d9d9d9;"></div>
<div style="left:0px;top:78.3px;width:1917px;height:1.5px;background:#efefef;"></div>
<div style="left:0px;top:79.7px;width:1917px;height:1.4px;background:#0c0c0c;"></div>
<div style="left:0px;top:0px;width:1.3px;height:79px;background:#a8a8a8;"></div>
<div style="left:1915.4px;top:0px;width:1.6px;height:79px;background:#efefef;"></div>
<div class="t" style="left:8.1px;top:5.14px;font-size:32.5px;line-height:36.82px;letter-spacing:0.12px;color:#111;-webkit-text-stroke:0.5px #111;">Binaural Analog Mixing</div>
<div class="t" style="left:9.8px;top:53.3px;font-size:20.3px;line-height:23px;color:#454545;-webkit-text-stroke:0;">V3.01</div>
<div class="t" style="left:1679.6px;top:31.78px;font-size:20.2px;line-height:22.88px;color:#454545;-webkit-text-stroke:0;">Design by</div>
<div style="left:807.9px;top:10px;width:299.5px;height:59.7px;background:#151515;border-radius:5px;"></div>
<svg class="a" style="left:800px;top:5px" width="320" height="70" viewBox="800 5 320 70"><path d="M823.4 39.8L838.8 25V54.7Z M838.4 39.8L853.8 25V54.7Z" fill="#dcdcdc"/><path d="M884.7 24.6L911 40L884.7 55.5Z" fill="#dcdcdc"/><path d="M942.4 24.8L957.7 39.9L942.4 55Z M957.7 24.8L973.1 39.9L957.7 55Z" fill="#dcdcdc"/><rect x="1002.8" y="24.8" width="30.8" height="30.2" fill="#ff6b6b"/><path d="M1073.7 25.3H1083.1V34.7H1092.5L1078.4 44.6L1063.3 34.7H1073.7Z" fill="#dcdcdc"/><path d="M1063.3 45.1H1068.3V50H1088V45.1H1093V55H1063.3Z" fill="#dcdcdc"/></svg>
<div style="left:1123px;top:9.8px;width:190.9px;height:59.9px;background:#151515;border-radius:5px;"></div>
<div style="left:1137.7px;top:24.8px;width:73.3px;height:30.5px;background:#d9d9d9;border-radius:3.5px;"></div>
<div class="t" style="left:1138px;top:32.68px;width:73.3px;font-size:16px;line-height:18.12px;text-align:center;letter-spacing:-0.6px;color:#111;">Save</div>
<div style="left:1225.7px;top:24.8px;width:73.5px;height:30.5px;background:#d9d9d9;border-radius:3.5px;"></div>
<div class="t" style="left:1226px;top:32.68px;width:73.5px;font-size:16px;line-height:18.12px;text-align:center;letter-spacing:-0.6px;color:#111;">Load</div>
<svg class="a" style="left:1795px;top:5px" width="120" height="70" viewBox="0 0 1848 1078"><polygon points="470,70 595,190 700,75 985,80 940,230 960,290 1290,290 1420,75 1725,80 1620,320 1735,540 1700,570 1580,590 1550,620 1600,760 1460,1000 1190,1000 1080,880 960,1000 700,1000 590,880 480,1000 200,1000 60,740 90,710 240,700 185,530" fill="#000" stroke="#000" stroke-width="24" stroke-linejoin="round"/><g fill="#000" stroke="#000" stroke-width="165" stroke-linejoin="miter" stroke-miterlimit="3"><polygon points="469.5,233.6 533.5,320.4 433,530.6 469.5,567.2 501.5,548.9 739.1,160.5 807.7,151.3 858,197 451.2,914.5 259.3,914.5 209,832.2 241,786.5 373.6,782 387.3,759.1 277.6,539.8 423.8,256.4"/><polygon points="850,366 1048,366 1149,540 940,912 735,912 640,750"/><polygon points="1468.9,160.5 1569.5,160.5 1592.3,206.2 1528.3,320.6 1592.3,448.6 1569.5,485.2 1432.3,498.9 1414,512.6 1295.1,741.2 1313.4,777.8 1345.4,768.6 1423.1,668.1 1468.9,658.9 1514.6,750.4 1418.6,915 1231.1,915 1135.1,750.4 1240.2,540 1180.8,421.1 1212.8,366.3 1340.8,352.6"/></g><g fill="#d9d9d9" stroke="#d9d9d9" stroke-width="22" stroke-linejoin="round"><polygon points="469.5,233.6 533.5,320.4 433,530.6 469.5,567.2 501.5,548.9 739.1,160.5 807.7,151.3 858,197 451.2,914.5 259.3,914.5 209,832.2 241,786.5 373.6,782 387.3,759.1 277.6,539.8 423.8,256.4"/><polygon points="850,366 1048,366 1149,540 940,912 735,912 640,750"/><polygon points="1468.9,160.5 1569.5,160.5 1592.3,206.2 1528.3,320.6 1592.3,448.6 1569.5,485.2 1432.3,498.9 1414,512.6 1295.1,741.2 1313.4,777.8 1345.4,768.6 1423.1,668.1 1468.9,658.9 1514.6,750.4 1418.6,915 1231.1,915 1135.1,750.4 1240.2,540 1180.8,421.1 1212.8,366.3 1340.8,352.6"/></g><path d="M966,525 L835,765" stroke="#000" stroke-width="75" stroke-linecap="round"/></svg>
</div></body></html>
